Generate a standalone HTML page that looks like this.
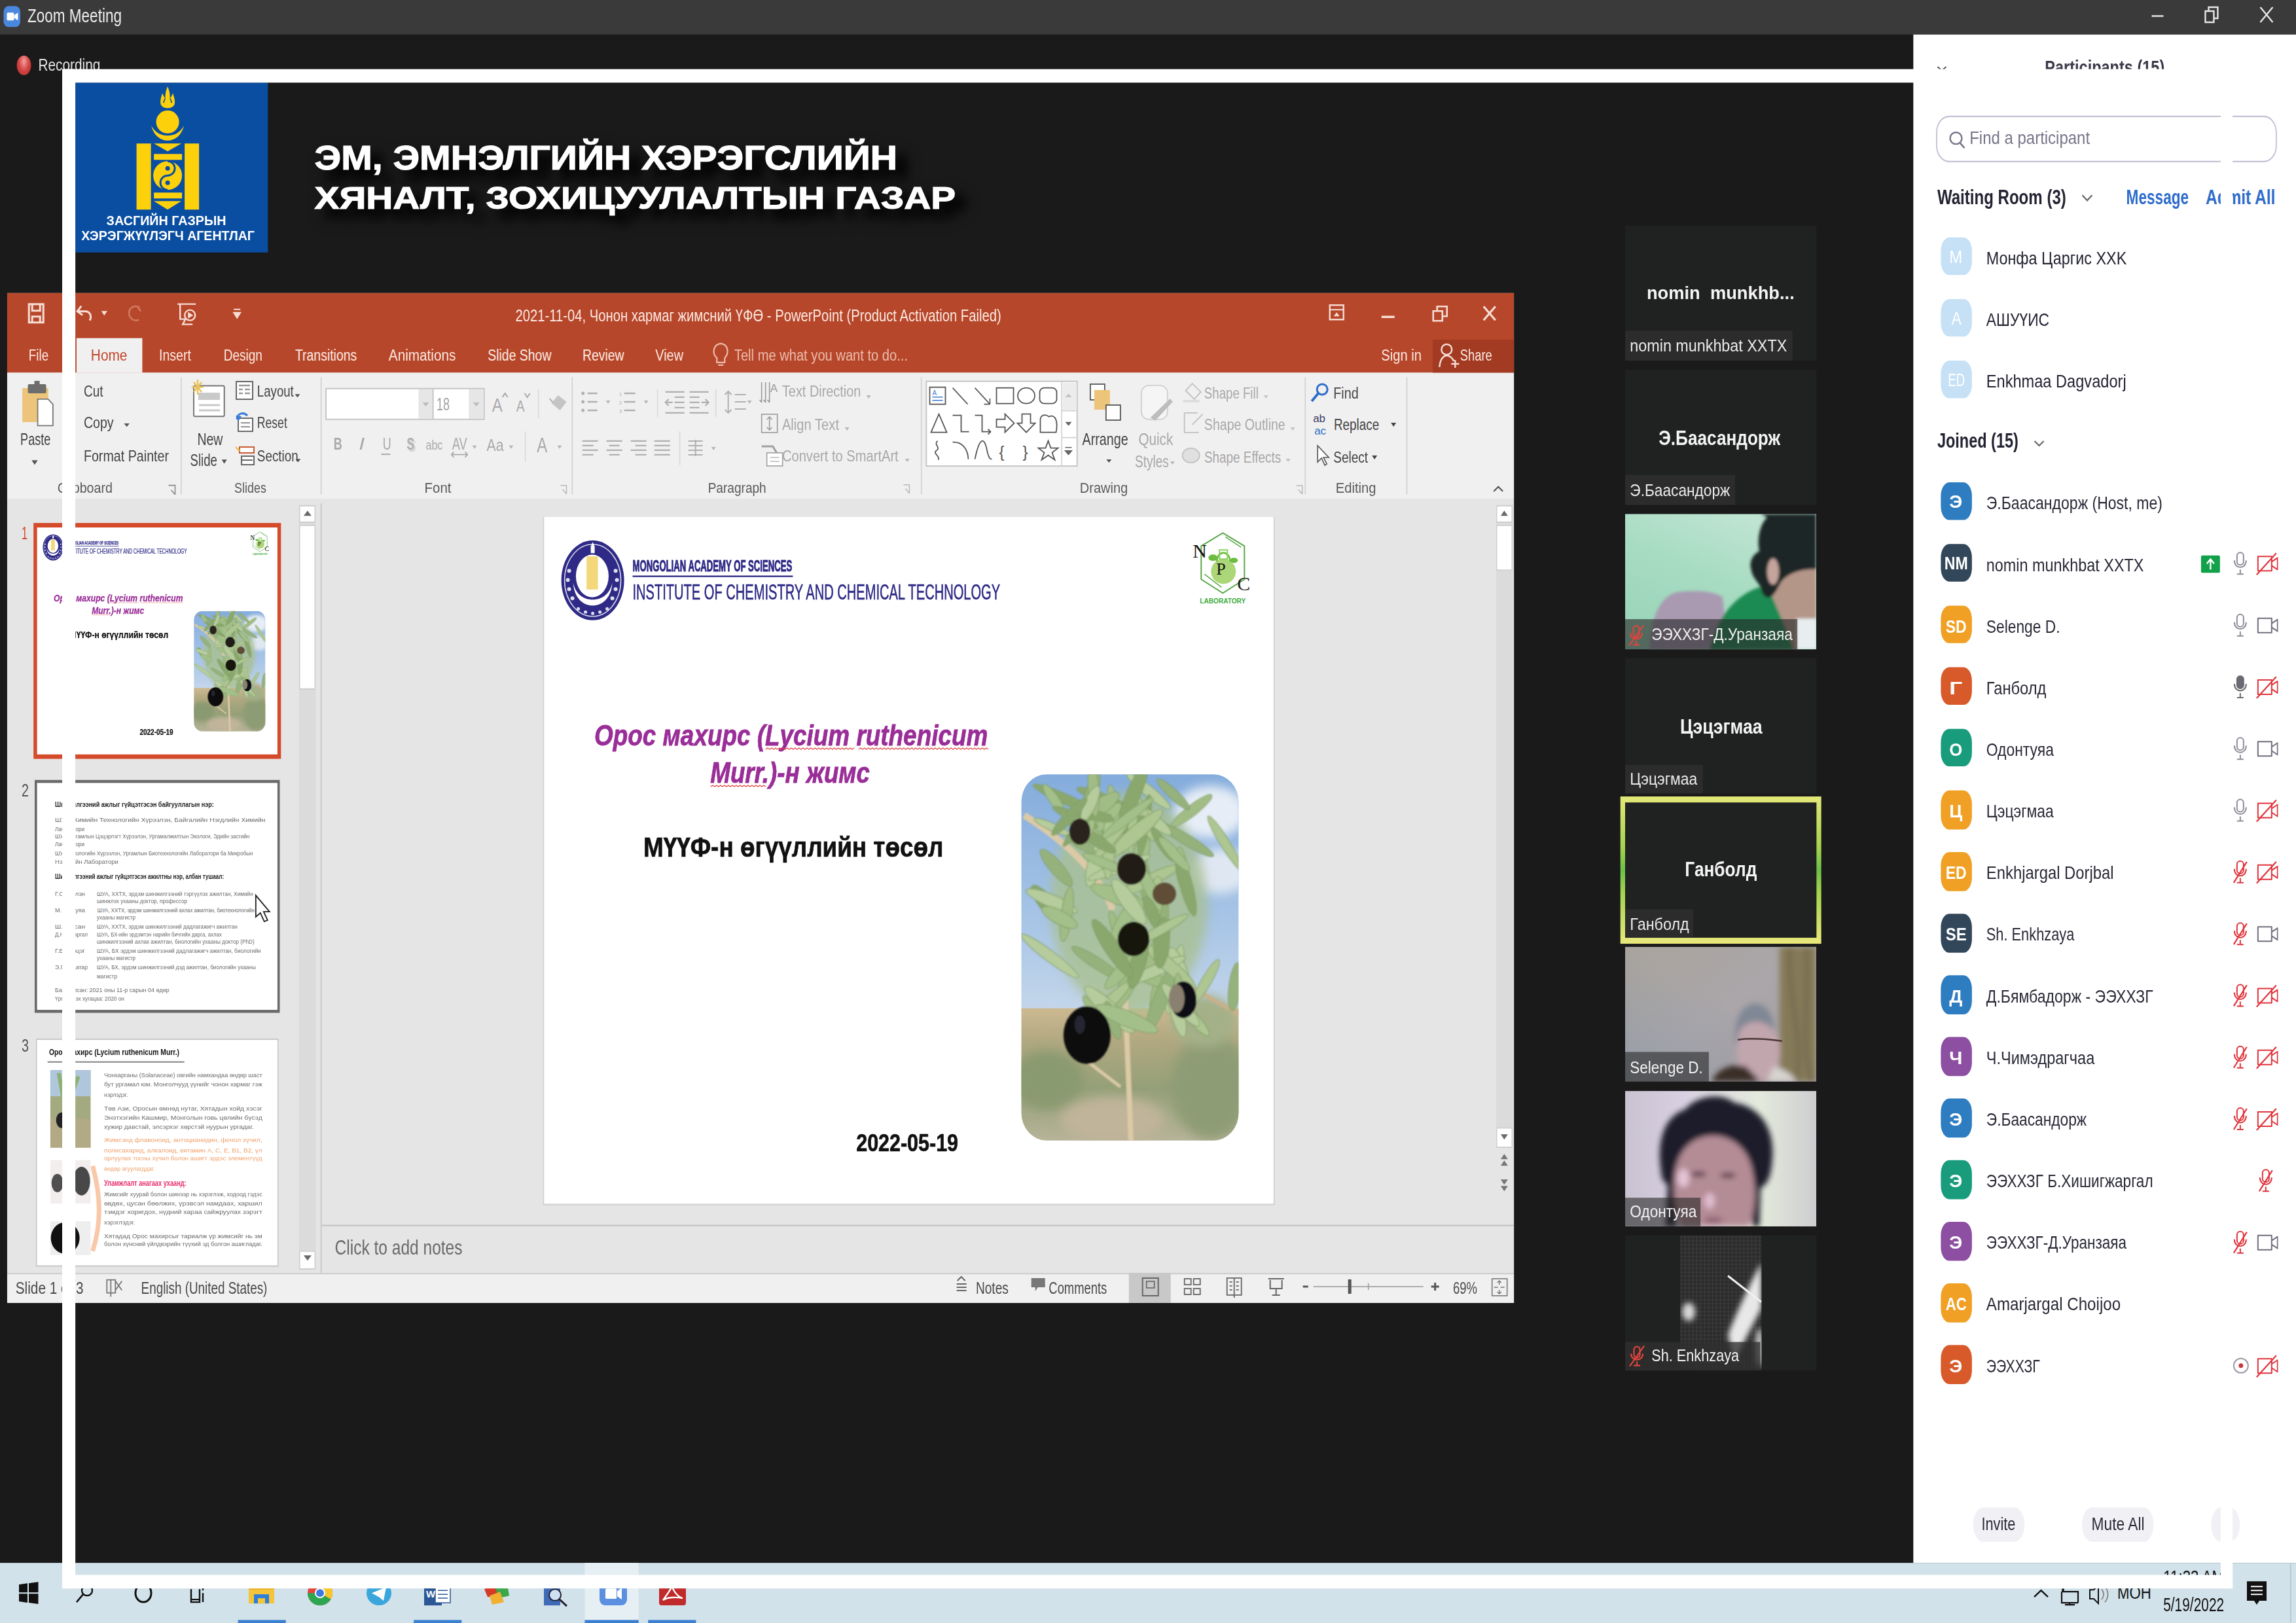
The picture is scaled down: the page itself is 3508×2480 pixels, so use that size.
<!DOCTYPE html>
<html><head><meta charset="utf-8">
<style>
html,body{margin:0;padding:0;width:3508px;height:2480px;overflow:hidden;background:#1a1a1a;}
#s{position:absolute;left:0;top:0;width:1920px;height:1080px;transform:scale(1.8270833,2.2962963);transform-origin:0 0;font-family:"Liberation Sans",sans-serif;overflow:hidden;background:#1a1a1a;}
#s div{position:absolute;}
.t{white-space:nowrap;line-height:1;}
</style></head>
<body><div id="s">
<div style="left:0px;top:0px;width:1920px;height:23.08px;background:#3a3a3a;"></div>
<div style="left:2.74px;top:3.92px;width:14.23px;height:13.94px;background:#4a87df;border-radius:4px"></div>
<svg style="position:absolute;left:2.74px;top:3.92px;width:14.23px;height:13.94px;overflow:visible;" viewBox="5 9 26 32" preserveAspectRatio="none"><rect x="10" y="19" width="11" height="12" rx="2" fill="#fff"/><path d="M21 23 L27 19 L27 31 L21 27 Z" fill="#fff"/></svg>
<div class="t" style="left:22.99px;top:5.3px;font-size:12.77px;color:#ececec;transform:scaleX(0.9654);transform-origin:0 0;">Zoom Meeting</div>
<svg style="position:absolute;left:1789.74px;top:0px;width:130.26px;height:23.08px;overflow:visible;" viewBox="3270 0 238 53" preserveAspectRatio="none"><path d="M3287 24.5 H3305" stroke="#e6e6e6" stroke-width="2.5"/><path d="M3369 17 H3382 V34 H3369 Z M3374 17 V11 H3388 V28 H3382" stroke="#e6e6e6" stroke-width="2.4" fill="none"/><path d="M3453 11 L3472 34 M3472 11 L3453 34" stroke="#e6e6e6" stroke-width="2.4"/></svg>
<div style="left:13.68px;top:37.45px;width:12.04px;height:13.06px;background:radial-gradient(ellipse at 50% 30%,#f4a0a0 0%,#d84a4a 45%,#b83030 80%);border-radius:50%"></div>
<div class="t" style="left:32.29px;top:37.76px;font-size:10.95px;color:#e2e2e2;transform:scaleX(1.0419);transform-origin:0 0;">Recording</div>
<div style="left:63.49px;top:54.87px;width:160.36px;height:112.79px;background:#0a4ea2;"></div>
<svg style="position:absolute;left:63.49px;top:54.87px;width:160.36px;height:112.79px;overflow:visible;" viewBox="116 126 293 259" preserveAspectRatio="none"><path d="M246 156 C246 150 248 146 249 142 C251 147 252 149 253.5 150 C253 142 255 137 257 131.7 C259 137 261 142 260.5 150 C262 149 263 147 265 142 C266 146 268 150 268 156 C268 162 263 165 257 165 C251 165 246 162 246 156 Z" fill="#fcd10c"/><path d="M251 157 C251 153 253 151 253.5 150 M263 157 C263 153 261 151 260.5 150" stroke="#0a4ea2" stroke-width="1.5" fill="none"/><circle cx="257" cy="186" r="17.5" fill="#fcd10c"/><path d="M232 192 C236 207 246 214.5 257 214.5 C268 214.5 278 207 282 192 C276 202 268 207 257 207 C246 207 238 202 232 192 Z" fill="#fcd10c"/><rect x="209.5" y="219" width="22" height="101" fill="#fcd10c"/><rect x="283" y="219" width="22" height="101" fill="#fcd10c"/><path d="M236 219 H278 L257 231 Z" fill="#fcd10c"/><rect x="236" y="235" width="43" height="9" fill="#fcd10c"/><circle cx="257" cy="268" r="22" fill="#fcd10c"/><path d="M257 246 A11 11 0 0 1 257 268 A11 11 0 0 0 257 290" stroke="#0a4ea2" stroke-width="3" fill="none"/><circle cx="257" cy="257" r="3.5" fill="#0a4ea2"/><circle cx="257" cy="279" r="3.5" fill="#0a4ea2"/><rect x="236" y="294" width="43" height="9" fill="#fcd10c"/><path d="M236 307 H278 L257 320 Z" fill="#fcd10c"/></svg>
<div class="t" style="left:89.21px;top:143.47px;font-size:8.52px;color:#fff;font-weight:bold;transform:scaleX(1.2687);transform-origin:0 0;">ЗАСГИЙН ГАЗРЫН</div>
<div class="t" style="left:68.42px;top:152.9px;font-size:8.7px;color:#fff;font-weight:bold;transform:scaleX(1.2325);transform-origin:0 0;">ХЭРЭГЖҮҮЛЭГЧ АГЕНТЛАГ</div>
<div class="t" style="left:263.26px;top:94.65px;font-size:22.2px;color:#fff;font-weight:bold;transform:scaleX(1.4090);transform-origin:0 0;-webkit-text-stroke:0.5px #fff;text-shadow:6px 6px 6px #000,5px 6px 10px #000;">ЭМ, ЭМНЭЛГИЙН ХЭРЭГСЛИЙН</div>
<div class="t" style="left:263.26px;top:122.21px;font-size:21.29px;color:#fff;font-weight:bold;transform:scaleX(1.4602);transform-origin:0 0;-webkit-text-stroke:0.5px #fff;text-shadow:6px 6px 6px #000,5px 6px 10px #000;">ХЯНАЛТ, ЗОХИЦУУЛАЛТЫН ГАЗАР</div>
<div style="left:6.02px;top:195.1px;width:1259.93px;height:671.52px;background:#e6e5e6;"></div>
<div style="left:6.02px;top:195.1px;width:1259.93px;height:52.69px;background:#b7472a;"></div>
<div style="left:6.02px;top:247.79px;width:1259.93px;height:84.48px;background:#f1f0f1;"></div>
<div style="left:63.87px;top:225.15px;width:55.33px;height:22.65px;background:#f1f0f1;"></div>
<div class="t" style="left:430.74px;top:204.99px;font-size:10.95px;color:#fbe8e2;transform:scaleX(1.0134);transform-origin:0 0;">2021-11-04, Чонон хармаг жимсний ҮФӨ - PowerPoint (Product Activation Failed)</div>
<div class="t" style="left:24.41px;top:230.94px;font-size:10.64px;color:#fbe9e3;transform:scaleX(0.9669);transform-origin:0 0;">File</div>
<div class="t" style="left:76.3px;top:230.94px;font-size:10.64px;color:#c0462a;transform:scaleX(1.0737);transform-origin:0 0;">Home</div>
<div class="t" style="left:133px;top:230.94px;font-size:10.64px;color:#fbe9e3;transform:scaleX(1.0075);transform-origin:0 0;">Insert</div>
<div class="t" style="left:187.18px;top:230.94px;font-size:10.64px;color:#fbe9e3;transform:scaleX(0.9812);transform-origin:0 0;">Design</div>
<div class="t" style="left:246.84px;top:230.94px;font-size:10.64px;color:#fbe9e3;">Transitions</div>
<div class="t" style="left:325.11px;top:230.94px;font-size:10.64px;color:#fbe9e3;transform:scaleX(1.0686);transform-origin:0 0;">Animations</div>
<div class="t" style="left:407.92px;top:230.94px;font-size:10.64px;color:#fbe9e3;">Slide Show</div>
<div class="t" style="left:487.06px;top:230.94px;font-size:10.64px;color:#fbe9e3;">Review</div>
<div class="t" style="left:548.09px;top:230.94px;font-size:10.64px;color:#fbe9e3;transform:scaleX(1.0263);transform-origin:0 0;">View</div>
<div class="t" style="left:614.26px;top:230.94px;font-size:10.64px;color:#ebbcad;transform:scaleX(1.0371);transform-origin:0 0;">Tell me what you want to do...</div>
<div class="t" style="left:1154.85px;top:230.94px;font-size:10.64px;color:#fbe9e3;transform:scaleX(1.0376);transform-origin:0 0;">Sign in</div>
<div style="left:1197.54px;top:225.58px;width:68.42px;height:22.21px;background:#a33b22;"></div>
<div class="t" style="left:1221.07px;top:230.94px;font-size:10.64px;color:#fbe9e3;transform:scaleX(0.9442);transform-origin:0 0;">Share</div>
<svg style="position:absolute;left:16.42px;top:198.15px;width:191.56px;height:19.6px;overflow:visible;" viewBox="30 455 350 45" preserveAspectRatio="none"><path d="M45 465 H67 V493 H45 Z M50 465 V475 H62 V465 M50 493 V484 H62 V493" stroke="#f6ddd5" stroke-width="3" fill="none"/><path d="M125 468 L119 476 L127 482 M120 476 H131 C139 476 141 484 138 490" stroke="#f6ddd5" stroke-width="3" fill="none"/><path d="M155.6 475.6 H164.7 L160 482.7 Z" fill="#f6ddd5"/><path d="M210 468 L216 476 M214 470 C205 465 197 472 198 480 C199 488 207 492 213 489" stroke="#cf7a62" stroke-width="2.5" fill="none"/><path d="M272 465 H300 M276 466 V488 H284 M284 488 L280 496 H295" stroke="#f6ddd5" stroke-width="2.4" fill="none"/><circle cx="291" cy="482" r="8" stroke="#f6ddd5" stroke-width="2.4" fill="none"/><path d="M288 477 L296 482 L288 487 Z" fill="#f6ddd5"/><path d="M358 473 H368 M358 478 H368 L363 486 Z" stroke="#f6ddd5" stroke-width="2" fill="#f6ddd5"/></svg>
<svg style="position:absolute;left:1105.59px;top:200.32px;width:153.25px;height:17.42px;overflow:visible;" viewBox="2020 460 280 40" preserveAspectRatio="none"><rect x="2031" y="467" width="21" height="22" stroke="#f6ddd5" stroke-width="2.4" fill="none"/><path d="M2031 474 H2052" stroke="#f6ddd5" stroke-width="2"/><path d="M2037 484 L2041.5 478 L2046 484 Z" fill="#f6ddd5"/><path d="M2110 485 H2130" stroke="#f6ddd5" stroke-width="3.5"/><path d="M2189 476 H2203 V491 H2189 Z M2195 476 V469 H2210 V484 H2203" stroke="#f6ddd5" stroke-width="2.6" fill="none"/><path d="M2266 469 L2284 490 M2284 469 L2266 490" stroke="#f6ddd5" stroke-width="3.2"/></svg>
<svg style="position:absolute;left:1201.37px;top:226.45px;width:21.89px;height:21.77px;overflow:visible;" viewBox="2195 520 40 50" preserveAspectRatio="none"><circle cx="2211" cy="535" r="8" stroke="#f6ddd5" stroke-width="2.4" fill="none"/><path d="M2200 562 C2201 550 2206 545 2211 544 C2216 545 2220 548 2222 553 M2218 557 H2230 M2224 551 V563" stroke="#f6ddd5" stroke-width="2.4" fill="none"/></svg>
<svg style="position:absolute;left:593.84px;top:226.45px;width:19.16px;height:21.77px;overflow:visible;" viewBox="1085 520 35 50" preserveAspectRatio="none"><path d="M1095 548 C1088 542 1088 528 1101 526 C1114 528 1113 542 1107 548 V555 H1095 Z M1097 559 H1105" stroke="#ebbcad" stroke-width="2.2" fill="none"/></svg>
<svg style="position:absolute;left:13.68px;top:252.58px;width:35.58px;height:60.97px;overflow:visible;" viewBox="25 580 65 140" preserveAspectRatio="none"><rect x="33.5" y="592" width="39.7" height="52" fill="#edc57a"/><rect x="42" y="586" width="28" height="14" rx="2" fill="#6d6d6d"/><rect x="52" y="581" width="8" height="8" fill="#6d6d6d"/><path d="M57 609 H73 L80.3 617 V649.5 H57 Z" fill="#fff" stroke="#777" stroke-width="1.8"/><path d="M47.8 702.3 H57 L52.4 709.4 Z" fill="#555"/></svg>
<div class="t" style="left:16.69px;top:287.14px;font-size:11.13px;color:#444444;transform:scaleX(0.8923);transform-origin:0 0;">Paste</div>
<div class="t" style="left:69.51px;top:256.15px;font-size:10.04px;color:#444444;transform:scaleX(1.0374);transform-origin:0 0;">Cut</div>
<div class="t" style="left:69.51px;top:277.4px;font-size:10.04px;color:#444444;transform:scaleX(1.0700);transform-origin:0 0;">Copy</div>
<div class="t" style="left:69.51px;top:299.13px;font-size:10.04px;color:#444444;transform:scaleX(1.0737);transform-origin:0 0;">Format Painter</div>
<svg style="position:absolute;left:101.25px;top:278.71px;width:41.05px;height:52.26px;overflow:visible;" viewBox="185 640 75 120" preserveAspectRatio="none"><path d="M190 646.4 H198.3 L194.2 651.5 Z" fill="#555"/><path d="M258 741 H268 V755 M262 748 L268 755" stroke="#888" stroke-width="1.6" fill="none"/></svg>
<div class="t" style="left:47.84px;top:320.62px;font-size:9.24px;color:#5a5a5a;transform:scaleX(1.1673);transform-origin:0 0;">Clipboard</div>
<div style="left:151.06px;top:251.27px;width:0.82px;height:77.52px;background:#d4d4d4;"></div>
<svg style="position:absolute;left:155.99px;top:250.4px;width:62.94px;height:63.15px;overflow:visible;" viewBox="285 575 115 145" preserveAspectRatio="none"><rect x="296" y="590.5" width="46.7" height="46.8" rx="2" fill="#fff" stroke="#777" stroke-width="2"/><rect x="303" y="601" width="33" height="11" fill="#c9c9c9"/><path d="M304 620 H336 M304 628 H336" stroke="#c9c9c9" stroke-width="3"/><g stroke="#e8c25a" stroke-width="2.5"><path d="M302 581 V604 M292.8 592.5 H311 M296 585 L308 600 M308 585 L296 600"/></g><path d="M338.6 703.3 H346.7 L342.6 709.4 Z" fill="#555"/><rect x="361" y="584" width="25" height="27" fill="#fff" stroke="#666" stroke-width="2"/><path d="M365 590 H382 M365 596 H371 M365 602 H371 M374 596 H382 M374 602 H382" stroke="#999" stroke-width="2.4"/><rect x="364" y="640" width="22" height="20" fill="#fff" stroke="#666" stroke-width="2"/><path d="M368 647 H382 M368 653 H382" stroke="#999" stroke-width="2.2"/><path d="M362 642 C362 632 372 630 378 636" stroke="#3a7bd5" stroke-width="3" fill="none"/><path d="M360 636 L364 645 L369 637 Z" fill="#3a7bd5"/><rect x="366" y="684" width="22" height="9" fill="#fff" stroke="#c85a30" stroke-width="2"/><rect x="369" y="698" width="19" height="13" fill="#fff" stroke="#666" stroke-width="2"/><path d="M370 704 H386" stroke="#666" stroke-width="2"/><path d="M360 684 L366 690" stroke="#e8c25a" stroke-width="2.5"/></svg>
<div class="t" style="left:164.52px;top:287.3px;font-size:10.95px;color:#444444;transform:scaleX(0.9746);transform-origin:0 0;">New</div>
<div class="t" style="left:159.38px;top:301.45px;font-size:10.95px;color:#444444;transform:scaleX(0.9285);transform-origin:0 0;">Slide</div>
<div class="t" style="left:214.55px;top:256.15px;font-size:10.04px;color:#444444;transform:scaleX(1.0172);transform-origin:0 0;">Layout</div>
<div class="t" style="left:214.55px;top:277.4px;font-size:10.04px;color:#444444;transform:scaleX(0.9603);transform-origin:0 0;">Reset</div>
<div class="t" style="left:214.55px;top:299.13px;font-size:10.04px;color:#444444;transform:scaleX(1.0301);transform-origin:0 0;">Section</div>
<svg style="position:absolute;left:246.29px;top:261.29px;width:10.95px;height:52.26px;overflow:visible;" viewBox="450 600 20 120" preserveAspectRatio="none"><path d="M451 603 H459 L455 608 Z M452 702 H460 L456 707 Z" fill="#555"/></svg>
<div class="t" style="left:196.43px;top:320.62px;font-size:9.24px;color:#5a5a5a;transform:scaleX(1.0607);transform-origin:0 0;">Slides</div>
<div style="left:268.19px;top:251.27px;width:0.82px;height:77.52px;background:#d4d4d4;"></div>
<svg style="position:absolute;left:268.19px;top:252.58px;width:213.45px;height:78.39px;overflow:visible;" viewBox="490 580 390 180" preserveAspectRatio="none"><rect x="498.4" y="592.8" width="241.6" height="47" fill="#fff" stroke="#c6c6c6" stroke-width="2"/><rect x="639.7" y="594" width="22.3" height="45" fill="#e6e6e6"/><rect x="716.6" y="594" width="22.4" height="45" fill="#e6e6e6"/><path d="M662 593 V640" stroke="#c6c6c6" stroke-width="2"/><path d="M646 614 H656 L651 620 Z M723 614 H733 L728 620 Z" fill="#bcbcbc"/><text x="752" y="628" font-family="Liberation Sans" font-size="30" fill="#a9a9a9" transform="translate(752 628) scale(0.8 1) translate(-752 -628)">A</text><path d="M768 606 L772 600 L776 606" stroke="#a9a9a9" stroke-width="2" fill="none"/><text x="789" y="628" font-family="Liberation Sans" font-size="24" fill="#a9a9a9" transform="translate(789 628) scale(0.8 1) translate(-789 -628)">A</text><path d="M802 600 L806 606 L810 600" stroke="#a9a9a9" stroke-width="2" fill="none"/><path d="M823 594 V638" stroke="#d8d8d8" stroke-width="1.5"/><path d="M843 615 L853 603 L866 613 L856 626 Z" fill="#c4c4c4"/><path d="M845 614 L840 608" stroke="#b0b0b0" stroke-width="2"/><path d="M803 658 V704" stroke="#d8d8d8" stroke-width="1.5"/></svg>
<div class="t" style="left:365.06px;top:262.75px;font-size:12.16px;color:#a0a0a0;transform:scaleX(0.8090);transform-origin:0 0;">18</div>
<div class="t" style="left:278.59px;top:290.27px;font-size:11.56px;color:#a9a9a9;font-weight:bold;transform:scaleX(0.8526);transform-origin:0 0;">B</div>
<div class="t" style="left:299.66px;top:290.27px;font-size:11.56px;color:#a9a9a9;font-style:italic;transform:scaleX(1.5343);transform-origin:0 0;">I</div>
<div class="t" style="left:319.64px;top:290.27px;font-size:11.56px;color:#a9a9a9;transform:scaleX(0.8526);transform-origin:0 0;">U</div>
<div class="t" style="left:340.43px;top:290.27px;font-size:11.56px;color:#b0b0b0;font-weight:bold;transform:scaleX(0.8520);transform-origin:0 0;text-shadow:1.5px 1.5px 1px #d0d0d0;">S</div>
<div class="t" style="left:356.31px;top:292.33px;font-size:9.12px;color:#a9a9a9;transform:scaleX(0.9674);transform-origin:0 0;">abc</div>
<div class="t" style="left:377.65px;top:290.27px;font-size:11.56px;color:#a9a9a9;transform:scaleX(0.8646);transform-origin:0 0;">AV</div>
<div class="t" style="left:407.21px;top:290.78px;font-size:10.95px;color:#a9a9a9;transform:scaleX(1.0626);transform-origin:0 0;">Aa</div>
<div class="t" style="left:449.35px;top:289.59px;font-size:13.38px;color:#a9a9a9;transform:scaleX(0.9811);transform-origin:0 0;">A</div>
<svg style="position:absolute;left:350.29px;top:278.71px;width:131.36px;height:52.26px;overflow:visible;" viewBox="640 640 240 120" preserveAspectRatio="none"><path d="M583 693.5 H597" stroke="#a9a9a9" stroke-width="2"/><path d="M690 694 H715 M690 694 L694 690 M690 694 L694 698 M715 694 L711 690 M715 694 L711 698" stroke="#a9a9a9" stroke-width="1.8" fill="none"/><path d="M722 680 H729 L725.5 685 Z M778 680 H785 L781.5 685 Z M852 680 H859 L855.5 685 Z" fill="#b5b5b5"/><path d="M857 741 H866 V754 M860 747 L866 754" stroke="#b8b8b8" stroke-width="1.5" fill="none"/></svg>
<div class="t" style="left:354.61px;top:321.27px;font-size:9.24px;color:#5a5a5a;transform:scaleX(1.2101);transform-origin:0 0;">Font</div>
<div style="left:477.81px;top:251.27px;width:0.82px;height:77.52px;background:#d4d4d4;"></div>
<svg style="position:absolute;left:481.64px;top:252.58px;width:284.61px;height:78.39px;overflow:visible;" viewBox="880 580 520 180" preserveAspectRatio="none"><g fill="#b0b0b0"><circle cx="890" cy="600" r="2.5"/><circle cx="890" cy="613" r="2.5"/><circle cx="890" cy="626" r="2.5"/></g><path d="M897 600 H912 M897 613 H912 M897 626 H912" stroke="#b0b0b0" stroke-width="2.5"/><path d="M925 611 H932 L928.5 616 Z M983 611 H990 L986.5 616 Z M1141 611 H1148 L1144.5 616 Z" fill="#b8b8b8"/><g fill="#b0b0b0" font-family="Liberation Sans" font-size="8"><text x="945" y="604">1</text><text x="945" y="617">2</text><text x="945" y="630">3</text></g><path d="M953 600 H970 M953 613 H970 M953 626 H970" stroke="#b0b0b0" stroke-width="2.5"/><path d="M1004 594 V636 M1093 594 V636 M1038 658 V710" stroke="#d8d8d8" stroke-width="1.5"/><path d="M1016 598 H1045 M1030 606 H1045 M1030 614 H1045 M1030 622 H1045 M1016 630 H1045 M1027 614 H1016 M1021 609 L1016 614 L1021 619" stroke="#b0b0b0" stroke-width="2.2" fill="none"/><path d="M1053 598 H1082 M1053 606 H1068 M1053 614 H1068 M1053 622 H1068 M1053 630 H1082 M1071 614 H1082 M1077 609 L1082 614 L1077 619" stroke="#b0b0b0" stroke-width="2.2" fill="none"/><path d="M1112 597 V630 M1107 602 L1112 597 L1117 602 M1107 625 L1112 630 L1117 625 M1122 602 H1139 M1122 613 H1139 M1122 624 H1139" stroke="#b0b0b0" stroke-width="2" fill="none"/><path d="M1163 583 V614 M1169 583 V614 M1175 583 V614 M1163 614 L1160 610 M1169 614 L1166 610 M1175 614 L1172 610" stroke="#9a9a9a" stroke-width="1.6" fill="none"/><text x="1176" y="598" font-family="Liberation Sans" font-size="17" fill="#9a9a9a">A</text><rect x="1163" y="632" width="24" height="28" fill="none" stroke="#9a9a9a" stroke-width="1.6"/><path d="M1175 636 V656 M1171 640 L1175 636 L1179 640 M1171 652 L1175 656 L1179 652" stroke="#9a9a9a" stroke-width="1.6" fill="none"/><path d="M1163 681 H1180 L1188 694" stroke="#a0a0a0" stroke-width="3" fill="none"/><rect x="1171" y="691" width="24" height="20" fill="#fff" stroke="#a0a0a0" stroke-width="1.6"/><path d="M1176 698 H1190 M1176 704 H1190" stroke="#b8b8b8" stroke-width="1.5"/><path d="M1323 603 H1330 L1326.5 608 Z M1290 652 H1297 L1293.5 657 Z M1382 700 H1389 L1385.5 705 Z" fill="#b8b8b8"/><path d="M889 673 H913 M889 680 H906 M889 687 H913 M889 694 H906" stroke="#b0b0b0" stroke-width="2.2"/><path d="M926 673 H950 M930 680 H946 M926 687 H950 M930 694 H946" stroke="#b0b0b0" stroke-width="2.2"/><path d="M963 673 H987 M970 680 H987 M963 687 H987 M970 694 H987" stroke="#b0b0b0" stroke-width="2.2"/><path d="M999 673 H1023 M999 680 H1023 M999 687 H1023 M999 694 H1023" stroke="#b0b0b0" stroke-width="2.2"/><path d="M1051 673 H1073 M1051 680 H1073 M1051 687 H1073 M1051 694 H1073 M1062 671 V696" stroke="#b0b0b0" stroke-width="2"/><path d="M1086 682 H1093 L1089.5 687 Z" fill="#b8b8b8"/></svg>
<svg style="position:absolute;left:755.3px;top:320.08px;width:10.95px;height:10.89px;overflow:visible;" viewBox="1380 735 20 25" preserveAspectRatio="none"><path d="M1381 741 H1390 V754 M1384 747 L1390 754" stroke="#b8b8b8" stroke-width="1.5" fill="none"/></svg>
<div class="t" style="left:653.72px;top:256.15px;font-size:10.34px;color:#a8a8a8;transform:scaleX(1.0538);transform-origin:0 0;">Text Direction</div>
<div class="t" style="left:653.72px;top:277.93px;font-size:10.34px;color:#a8a8a8;transform:scaleX(1.0691);transform-origin:0 0;">Align Text</div>
<div class="t" style="left:653.72px;top:298.96px;font-size:10.34px;color:#a8a8a8;transform:scaleX(1.0663);transform-origin:0 0;">Convert to SmartArt</div>
<div class="t" style="left:592.09px;top:321.27px;font-size:9.24px;color:#5a5a5a;transform:scaleX(1.1308);transform-origin:0 0;">Paragraph</div>
<div style="left:769.53px;top:251.27px;width:0.82px;height:77.52px;background:#d4d4d4;"></div>
<svg style="position:absolute;left:771.72px;top:251.71px;width:131.36px;height:59.66px;overflow:visible;" viewBox="1410 578 240 137" preserveAspectRatio="none"><rect x="1414.8" y="582" width="230.4" height="129.5" fill="#fff" stroke="#c6c6c6" stroke-width="2"/><path d="M1621.6 583 V711 M1622 627 H1645 M1622 668 H1645" stroke="#d0d0d0" stroke-width="1.6"/><rect x="1623" y="584" width="21" height="42" fill="#ececec"/><path d="M1627 606 L1632 601 L1637 606 Z" fill="#c0c0c0"/><path d="M1627 644 H1637 L1632 650 Z" fill="#666"/><path d="M1627 683 H1637 M1627 688 H1637 L1632 694 Z" stroke="#666" stroke-width="1.5" fill="#666"/><rect x="1420" y="591" width="24" height="26" fill="none" stroke="#555" stroke-width="1.8"/><path d="M1424 606 H1440 M1424 611 H1440" stroke="#3a7bd5" stroke-width="1.5"/><text x="1424" y="603" font-size="10" font-family="Liberation Sans" fill="#3a7bd5">A</text><path d="M1455 592 L1478 617" stroke="#555" stroke-width="1.6"/><path d="M1489 592 L1512 617 M1512 617 V608 M1512 617 H1503" stroke="#555" stroke-width="1.6" fill="none"/><rect x="1522" y="592" width="26" height="24" fill="none" stroke="#555" stroke-width="1.8"/><ellipse cx="1567.5" cy="604" rx="13" ry="12" fill="none" stroke="#555" stroke-width="1.8"/><rect x="1588" y="592" width="26" height="24" rx="7" fill="none" stroke="#555" stroke-width="1.8"/><path d="M1422 660 L1434 632 L1446 660 Z" fill="none" stroke="#555" stroke-width="1.8"/><path d="M1455 634 H1468 V659 H1480" stroke="#555" stroke-width="1.8" fill="none"/><path d="M1489 634 H1500 V659 H1513 M1509 655 L1513 659 L1509 663" stroke="#555" stroke-width="1.8" fill="none"/><path d="M1522 640 H1535 V632 L1549 646 L1535 660 V652 H1522 Z" fill="none" stroke="#555" stroke-width="1.8"/><path d="M1561 632 H1574 V646 H1581 L1567.5 660 L1554 646 H1561 Z" fill="none" stroke="#555" stroke-width="1.8"/><path d="M1589 660 V641 C1589 634 1596 631 1602 636 C1613 631 1616 645 1613 660 Z" fill="none" stroke="#555" stroke-width="1.8"/><path d="M1432 673 C1425 679 1438 683 1430 688 C1424 692 1437 697 1433 702" stroke="#555" stroke-width="1.8" fill="none"/><path d="M1455 675 C1468 674 1478 683 1479 701" stroke="#555" stroke-width="1.8" fill="none"/><path d="M1489 701 C1496 667 1503 667 1507 685 C1510 701 1513 701 1515 701" stroke="#555" stroke-width="1.8" fill="none"/><text x="1526" y="698" font-size="24" font-family="Liberation Sans" fill="#555">{</text><text x="1562" y="698" font-size="24" font-family="Liberation Sans" fill="#555">}</text><path d="M1601 673 L1605 684 L1616 684 L1607 691 L1611 702 L1601 695 L1591 702 L1595 691 L1586 684 L1597 684 Z" fill="none" stroke="#555" stroke-width="1.8"/></svg>
<svg style="position:absolute;left:903.08px;top:252.58px;width:82.1px;height:60.97px;overflow:visible;" viewBox="1650 580 150 140" preserveAspectRatio="none"><rect x="1666" y="586" width="22" height="24" fill="#fff" stroke="#555" stroke-width="1.8"/><rect x="1672" y="595" width="24" height="30" fill="#edc57a"/><rect x="1690" y="618" width="22" height="23" fill="#fff" stroke="#555" stroke-width="1.8"/><path d="M1690.5 701 H1698.5 L1694.5 706 Z" fill="#555"/><rect x="1744" y="588" width="40" height="52" rx="12" fill="#f5f5f5" stroke="#cfcfcf" stroke-width="1.8"/><path d="M1758 637 L1788 608 L1792 613 L1765 642 Z" fill="#bdbdbd"/><path d="M1788 704 H1795 L1791.5 709 Z" fill="#b8b8b8"/></svg>
<div class="t" style="left:905.49px;top:286.86px;font-size:10.95px;color:#444444;transform:scaleX(0.9864);transform-origin:0 0;">Arrange</div>
<div class="t" style="left:952.23px;top:286.86px;font-size:10.95px;color:#a8a8a8;transform:scaleX(1.0366);transform-origin:0 0;">Quick</div>
<div class="t" style="left:948.73px;top:301.8px;font-size:10.95px;color:#a8a8a8;transform:scaleX(0.9546);transform-origin:0 0;">Styles</div>
<svg style="position:absolute;left:985.18px;top:252.58px;width:103.99px;height:60.97px;overflow:visible;" viewBox="1800 580 190 140" preserveAspectRatio="none"><path d="M1812 596 L1822 585 L1835 598 L1825 609 Z" fill="none" stroke="#c0c0c0" stroke-width="1.8"/><rect x="1808" y="610" width="25" height="4" fill="#ddd"/><path d="M1810 630 H1830 M1810 630 V660 H1832 M1822 648 L1838 632" stroke="#c0c0c0" stroke-width="1.8" fill="none"/><ellipse cx="1820" cy="695" rx="13" ry="11" fill="#e0e0e0" stroke="#c0c0c0" stroke-width="1.8"/><path d="M1931 603 H1938 L1934.5 608 Z M1972 652 H1979 L1975.5 657 Z M1965 700 H1972 L1968.5 705 Z" fill="#c4c4c4"/><path d="M1981 741 H1990 V754 M1984 747 L1990 754" stroke="#b8b8b8" stroke-width="1.5" fill="none"/></svg>
<div class="t" style="left:1007.07px;top:256.89px;font-size:10.34px;color:#a8a8a8;transform:scaleX(0.9880);transform-origin:0 0;">Shape Fill</div>
<div class="t" style="left:1007.07px;top:277.8px;font-size:10.34px;color:#a8a8a8;transform:scaleX(1.0356);transform-origin:0 0;">Shape Outline</div>
<div class="t" style="left:1007.07px;top:299.57px;font-size:10.34px;color:#a8a8a8;">Shape Effects</div>
<div class="t" style="left:902.64px;top:320.66px;font-size:9.24px;color:#5a5a5a;transform:scaleX(1.1847);transform-origin:0 0;">Drawing</div>
<div style="left:1090.81px;top:251.27px;width:0.82px;height:77.52px;background:#d4d4d4;"></div>
<svg style="position:absolute;left:1091.9px;top:252.58px;width:84.83px;height:60.97px;overflow:visible;" viewBox="1995 580 155 140" preserveAspectRatio="none"><circle cx="2020" cy="594" r="8" fill="none" stroke="#2f6fc8" stroke-width="3"/><path d="M2014 600 L2004 612" stroke="#2f6fc8" stroke-width="4"/><text x="2006" y="644" font-family="Liberation Sans" font-size="17" fill="#3d3d6b">ab</text><text x="2008" y="663" font-family="Liberation Sans" font-size="17" fill="#2f6fc8">ac</text><path d="M2013 680 V705 L2019 699 L2024 710 L2027 708 L2022 698 L2030 698 Z" fill="#fff" stroke="#555" stroke-width="1.6"/><path d="M2125 645 H2133 L2129 651 Z M2096 695 H2104 L2100 701 Z" fill="#444"/></svg>
<div class="t" style="left:1115.44px;top:256.89px;font-size:10.34px;color:#444444;transform:scaleX(1.0476);transform-origin:0 0;">Find</div>
<div class="t" style="left:1115.44px;top:277.8px;font-size:10.34px;color:#444444;">Replace</div>
<div class="t" style="left:1115.44px;top:299.57px;font-size:10.34px;color:#444444;transform:scaleX(1.0094);transform-origin:0 0;">Select</div>
<div class="t" style="left:1116.7px;top:320.66px;font-size:9.24px;color:#5a5a5a;transform:scaleX(1.1946);transform-origin:0 0;">Editing</div>
<div style="left:1175.64px;top:251.27px;width:0.82px;height:77.52px;background:#d4d4d4;"></div>
<svg style="position:absolute;left:1247.89px;top:320.08px;width:10.95px;height:8.71px;overflow:visible;" viewBox="2280 735 20 20" preserveAspectRatio="none"><path d="M2282 751 L2289 744 L2296 751" stroke="#555" stroke-width="2.2" fill="none"/></svg>
<div style="left:6.02px;top:332.27px;width:1259.93px;height:515.18px;background:#e6e5e6;"></div>
<div style="left:267.91px;top:335.32px;width:0.82px;height:512.13px;background:#c9c8c9;"></div>
<div style="left:250.4px;top:335.76px;width:13.41px;height:509.08px;background:#dcdbdc;"></div>
<div style="left:250.4px;top:335.76px;width:13.41px;height:12.19px;background:#fff;box-sizing:border-box;border:1px solid #cfcfcf;"></div>
<div style="left:250.4px;top:349.26px;width:13.41px;height:110.18px;background:#fff;box-sizing:border-box;border:1px solid #cfcfcf;"></div>
<div style="left:250.4px;top:831.77px;width:13.41px;height:13.06px;background:#fff;box-sizing:border-box;border:1px solid #cfcfcf;"></div>
<svg style="position:absolute;left:249.03px;top:335.32px;width:16.42px;height:511.69px;overflow:visible;" viewBox="455 770 30 1175" preserveAspectRatio="none"><path d="M464 789 L470 781 L476 789 Z M464 1919 H476 L470 1927 Z" fill="#6a6a6a"/></svg>
<div class="t" style="left:17.51px;top:348.98px;font-size:12.16px;color:#d24726;transform:scaleX(0.7281);transform-origin:0 0;">1</div>
<div class="t" style="left:18.06px;top:520.12px;font-size:12.16px;color:#555;transform:scaleX(0.8899);transform-origin:0 0;">2</div>
<div class="t" style="left:18.06px;top:689.96px;font-size:12.16px;color:#555;transform:scaleX(0.8899);transform-origin:0 0;">3</div>
<div style="left:27.8px;top:347.95px;width:207px;height:157.04px;background:#fff;box-sizing:border-box;border:3.3px solid #d34b2a;"></div>
<div style="left:0;top:0;width:1920px;height:1080px;transform:translate(-118.41px,237.39px) scale(0.3285);transform-origin:0 0;"><svg style="position:absolute;left:465.22px;top:354.92px;width:82.1px;height:60.97px;overflow:visible;" viewBox="850 815 150 140" preserveAspectRatio="none"><ellipse cx="906" cy="886.6" rx="48" ry="61" fill="#2e2a86"/><ellipse cx="906" cy="886.6" rx="43" ry="55" fill="none" stroke="#fff" stroke-width="1.6" opacity="0.8"/><path d="M876 890 C878 915 892 925 906 925 C920 925 934 915 936 890 C932 908 920 916 906 916 C892 916 880 908 876 890 Z" fill="#fff"/><ellipse cx="905.3" cy="880" rx="25" ry="32.6" fill="#fff"/><rect x="896.6" y="850" width="17.4" height="50.6" fill="#f3d77a"/><path d="M903 835 L906 828 L909 835 V845 H903 Z" fill="#fff"/><g fill="#fff" opacity="0.85"><circle cx="870" cy="872" r="3"/><circle cx="868" cy="886" r="3"/><circle cx="870" cy="900" r="3"/><circle cx="875" cy="914" r="3"/><circle cx="941" cy="872" r="3"/><circle cx="943" cy="886" r="3"/><circle cx="941" cy="900" r="3"/><circle cx="936" cy="914" r="3"/><circle cx="884" cy="930" r="2.5"/><circle cx="895" cy="935" r="2.5"/><circle cx="906" cy="937" r="2.5"/><circle cx="917" cy="935" r="2.5"/><circle cx="928" cy="930" r="2.5"/></g></svg>
<div class="t" style="left:529.37px;top:371.69px;font-size:10.34px;color:#2e2a86;font-weight:bold;transform:scaleX(0.6960);transform-origin:0 0;-webkit-text-stroke:0.4px #2e2a86;">MONGOLIAN ACADEMY OF SCIENCES</div>
<div style="left:529.26px;top:382.7px;width:133.55px;height:1.13px;background:#2e2a86;"></div>
<div class="t" style="left:529.37px;top:386.54px;font-size:14.29px;color:#2e2a86;transform:scaleX(0.7695);transform-origin:0 0;-webkit-text-stroke:0.25px #2e2a86;">INSTITUTE OF CHEMISTRY AND CHEMICAL TECHNOLOGY</div>
<svg style="position:absolute;left:993.39px;top:351.87px;width:57.47px;height:53.13px;overflow:visible;" viewBox="1815 808 105 122" preserveAspectRatio="none"><path d="M1869 814 L1902 834 V885 L1869 906 L1836 885 V834 Z" fill="none" stroke="#5aa84a" stroke-width="2"/><path d="M1873 820 L1897 836" stroke="#5aa84a" stroke-width="1.5"/><path d="M1841 877 L1867 897" stroke="#5aa84a" stroke-width="1.5"/><circle cx="1870" cy="873" r="19" fill="#9ed060" opacity="0.85"/><path d="M1860 858 C1860 840 1880 840 1880 858" fill="none" stroke="#7cc050" stroke-width="3"/><rect x="1864" y="840" width="12" height="14" fill="none" stroke="#8bd060" stroke-width="2"/><ellipse cx="1854" cy="852" rx="7" ry="5" fill="#6cbc40"/><ellipse cx="1886" cy="856" rx="6" ry="4" fill="#6cbc40"/><text x="1823" y="852" font-family="Liberation Serif" font-size="30" fill="#111">N</text><text x="1859" y="878" font-family="Liberation Serif" font-size="26" fill="#111">P</text><text x="1891" y="902" font-family="Liberation Serif" font-size="30" fill="#222">C</text><text x="1834" y="922" font-family="Liberation Sans" font-weight="bold" font-size="10.5" fill="#3cab3c" textLength="70" lengthAdjust="spacingAndGlyphs">LABORATORY</text></svg>
<div class="t" style="left:496.97px;top:480.19px;font-size:19.46px;color:#9a2e98;font-weight:bold;font-style:italic;transform:scaleX(1.0387);transform-origin:0 0;-webkit-text-stroke:0.35px #9a2e98;">Орос махирс (Lycium ruthenicum</div>
<div class="t" style="left:594.39px;top:504.62px;font-size:19.46px;color:#9a2e98;font-weight:bold;font-style:italic;transform:scaleX(1.0340);transform-origin:0 0;-webkit-text-stroke:0.35px #9a2e98;">Murr.)-н жимс</div>
<svg style="position:absolute;left:602.05px;top:496.45px;width:229.87px;height:30.48px;overflow:visible;" viewBox="1100 1140 420 70" preserveAspectRatio="none"><path d="M1170 1146 L1173 1144 L1176 1146 L1179 1144 L1182 1146 L1185 1144 L1188 1146 L1191 1144 L1194 1146 L1197 1144 L1200 1146 L1203 1144 L1206 1146 L1209 1144 L1212 1146 L1215 1144 L1218 1146 L1221 1144 L1224 1146 L1227 1144 L1230 1146 L1233 1144 L1236 1146 L1239 1144 L1242 1146 L1245 1144 L1248 1146 L1251 1144 L1254 1146 L1257 1144 L1260 1146 L1263 1144 L1266 1146 L1269 1144 L1272 1146 L1275 1144 L1278 1146 L1281 1144 L1284 1146 L1287 1144 L1290 1146 L1293 1144 L1296 1146 L1299 1144 L1302 1146 L1305 1144" stroke="#e04040" stroke-width="1.3" fill="none"/><path d="M1312 1146 L1315 1144 L1318 1146 L1321 1144 L1324 1146 L1327 1144 L1330 1146 L1333 1144 L1336 1146 L1339 1144 L1342 1146 L1345 1144 L1348 1146 L1351 1144 L1354 1146 L1357 1144 L1360 1146 L1363 1144 L1366 1146 L1369 1144 L1372 1146 L1375 1144 L1378 1146 L1381 1144 L1384 1146 L1387 1144 L1390 1146 L1393 1144 L1396 1146 L1399 1144 L1402 1146 L1405 1144 L1408 1146 L1411 1144 L1414 1146 L1417 1144 L1420 1146 L1423 1144 L1426 1146 L1429 1144 L1432 1146 L1435 1144 L1438 1146 L1441 1144 L1444 1146 L1447 1144 L1450 1146 L1453 1144 L1456 1146 L1459 1144 L1462 1146 L1465 1144 L1468 1146 L1471 1144 L1474 1146 L1477 1144 L1480 1146 L1483 1144 L1486 1146 L1489 1144 L1492 1146 L1495 1144 L1498 1146 L1501 1144 L1504 1146 L1507 1144 L1510 1146" stroke="#e04040" stroke-width="1.3" fill="none"/><path d="M1086 1203 L1089 1201 L1092 1203 L1095 1201 L1098 1203 L1101 1201 L1104 1203 L1107 1201 L1110 1203 L1113 1201 L1116 1203 L1119 1201 L1122 1203 L1125 1201 L1128 1203 L1131 1201 L1134 1203 L1137 1201 L1140 1203 L1143 1201 L1146 1203 L1149 1201 L1152 1203 L1155 1201 L1158 1203 L1161 1201 L1164 1203 L1167 1201 L1170 1203" stroke="#e04040" stroke-width="1.3" fill="none"/></svg>
<div class="t" style="left:538.4px;top:554.95px;font-size:18.25px;color:#111;font-weight:bold;transform:scaleX(1.1052);transform-origin:0 0;-webkit-text-stroke:0.3px #111;">МҮҮФ-н өгүүллийн төсөл</div>
<div class="t" style="left:715.9px;top:751.9px;font-size:16.42px;color:#111;font-weight:bold;transform:scaleX(1.0164);transform-origin:0 0;-webkit-text-stroke:0.3px #111;">2022-05-19</div>
<svg style="position:absolute;left:851.08px;top:511.69px;width:188.83px;height:250.4px;overflow:visible;" viewBox="1555 1175 345 575" preserveAspectRatio="none"><defs><clipPath id="t_phc"><rect x="1560.7" y="1182.5" width="331.8" height="559.5" rx="38" ry="42"/></clipPath><linearGradient id="t_sky" x1="0" y1="0" x2="0" y2="1"><stop offset="0" stop-color="#84acdc"/><stop offset="0.6" stop-color="#a6c4e6"/><stop offset="1" stop-color="#c4d6ea"/></linearGradient><linearGradient id="t_gnd" x1="0" y1="0" x2="0" y2="1"><stop offset="0" stop-color="#cdb992"/><stop offset="0.25" stop-color="#b0a880"/><stop offset="0.6" stop-color="#95a078"/><stop offset="1" stop-color="#b8b49a"/></linearGradient><filter id="t_bl" x="-20%" y="-20%" width="140%" height="140%"><feGaussianBlur stdDeviation="8"/></filter><filter id="t_bl2" x="-5%" y="-5%" width="110%" height="110%"><feGaussianBlur stdDeviation="1.2"/></filter></defs><g clip-path="url(#t_phc)"><rect x="1560" y="1182" width="334" height="362" fill="url(#t_sky)"/><rect x="1560" y="1540" width="334" height="204" fill="url(#t_gnd)"/><g filter="url(#t_bl)"><ellipse cx="1850" cy="1240" rx="55" ry="40" fill="#e6edf6"/><ellipse cx="1865" cy="1330" rx="45" ry="35" fill="#dfe7f2"/><ellipse cx="1725" cy="1380" rx="120" ry="170" fill="#a9bf8e" opacity="0.8"/><ellipse cx="1600" cy="1650" rx="55" ry="45" fill="#8a9a70"/><ellipse cx="1850" cy="1660" rx="60" ry="80" fill="#8e9c74"/><ellipse cx="1700" cy="1710" rx="80" ry="35" fill="#c0b49a"/><ellipse cx="1840" cy="1560" rx="50" ry="40" fill="#a4b088"/></g><g filter="url(#t_bl2)"><path d="M1565 1245 C1620 1280 1680 1330 1700 1390" stroke="#dccaa6" stroke-width="10" fill="none"/><path d="M1718 1470 C1720 1560 1725 1650 1728 1745" stroke="#dccaa6" stroke-width="8" fill="none"/><path d="M1780 1480 C1820 1510 1860 1530 1895 1550" stroke="#c9b08a" stroke-width="6" fill="none"/><path d="M1660 1620 L1712 1660" stroke="#dccaa6" stroke-width="5" fill="none"/><ellipse cx="1710" cy="1431" rx="7.4" ry="42.5" transform="rotate(-19 1710 1431)" fill="#a2bc86" stroke="#7f9c64" stroke-width="1"/><ellipse cx="1767" cy="1527" rx="9.1" ry="34.5" transform="rotate(7 1767 1527)" fill="#a2bc86" stroke="#7f9c64" stroke-width="1"/><ellipse cx="1795" cy="1496" rx="10.1" ry="53.6" transform="rotate(11 1795 1496)" fill="#b6cc9c" stroke="#7f9c64" stroke-width="1"/><ellipse cx="1755" cy="1208" rx="8.1" ry="43.0" transform="rotate(-51 1755 1208)" fill="#b6cc9c" stroke="#7f9c64" stroke-width="1"/><ellipse cx="1744" cy="1304" rx="11.1" ry="32.9" transform="rotate(11 1744 1304)" fill="#a4c08a" stroke="#7f9c64" stroke-width="1"/><ellipse cx="1749" cy="1260" rx="7.5" ry="47.2" transform="rotate(9 1749 1260)" fill="#8aa86e" stroke="#7f9c64" stroke-width="1"/><ellipse cx="1750" cy="1348" rx="8.6" ry="43.8" transform="rotate(-7 1750 1348)" fill="#96b27c" stroke="#7f9c64" stroke-width="1"/><ellipse cx="1812" cy="1282" rx="7.9" ry="49.1" transform="rotate(-59 1812 1282)" fill="#96b27c" stroke="#7f9c64" stroke-width="1"/><ellipse cx="1604" cy="1460" rx="8.4" ry="54.5" transform="rotate(-53 1604 1460)" fill="#b6cc9c" stroke="#7f9c64" stroke-width="1"/><ellipse cx="1706" cy="1251" rx="8.7" ry="53.2" transform="rotate(-11 1706 1251)" fill="#a4c08a" stroke="#7f9c64" stroke-width="1"/><ellipse cx="1802" cy="1482" rx="11.1" ry="37.2" transform="rotate(-21 1802 1482)" fill="#b6cc9c" stroke="#7f9c64" stroke-width="1"/><ellipse cx="1723" cy="1501" rx="11.7" ry="40.8" transform="rotate(23 1723 1501)" fill="#a2bc86" stroke="#7f9c64" stroke-width="1"/><ellipse cx="1719" cy="1404" rx="10.4" ry="40.0" transform="rotate(30 1719 1404)" fill="#a4c08a" stroke="#7f9c64" stroke-width="1"/><ellipse cx="1674" cy="1318" rx="11.7" ry="37.6" transform="rotate(16 1674 1318)" fill="#b6cc9c" stroke="#7f9c64" stroke-width="1"/><ellipse cx="1821" cy="1238" rx="8.2" ry="38.6" transform="rotate(52 1821 1238)" fill="#a2bc86" stroke="#7f9c64" stroke-width="1"/><ellipse cx="1762" cy="1252" rx="9.0" ry="35.5" transform="rotate(-51 1762 1252)" fill="#b6cc9c" stroke="#7f9c64" stroke-width="1"/><ellipse cx="1757" cy="1344" rx="8.8" ry="51.9" transform="rotate(64 1757 1344)" fill="#aec692" stroke="#7f9c64" stroke-width="1"/><ellipse cx="1688" cy="1221" rx="7.8" ry="45.8" transform="rotate(-68 1688 1221)" fill="#8aa86e" stroke="#7f9c64" stroke-width="1"/><ellipse cx="1745" cy="1244" rx="9.7" ry="44.5" transform="rotate(-25 1745 1244)" fill="#aec692" stroke="#7f9c64" stroke-width="1"/><ellipse cx="1769" cy="1445" rx="9.6" ry="44.7" transform="rotate(25 1769 1445)" fill="#a2bc86" stroke="#7f9c64" stroke-width="1"/><ellipse cx="1798" cy="1542" rx="10.4" ry="43.1" transform="rotate(-14 1798 1542)" fill="#b6cc9c" stroke="#7f9c64" stroke-width="1"/><ellipse cx="1793" cy="1213" rx="7.3" ry="33.6" transform="rotate(-47 1793 1213)" fill="#96b27c" stroke="#7f9c64" stroke-width="1"/><ellipse cx="1777" cy="1412" rx="7.5" ry="43.3" transform="rotate(5 1777 1412)" fill="#96b27c" stroke="#7f9c64" stroke-width="1"/><ellipse cx="1708" cy="1267" rx="8.9" ry="45.1" transform="rotate(64 1708 1267)" fill="#8aa86e" stroke="#7f9c64" stroke-width="1"/><ellipse cx="1710" cy="1325" rx="7.6" ry="50.9" transform="rotate(69 1710 1325)" fill="#b6cc9c" stroke="#7f9c64" stroke-width="1"/><ellipse cx="1674" cy="1243" rx="10.7" ry="48.0" transform="rotate(-3 1674 1243)" fill="#a4c08a" stroke="#7f9c64" stroke-width="1"/><ellipse cx="1731" cy="1250" rx="7.1" ry="53.7" transform="rotate(4 1731 1250)" fill="#aec692" stroke="#7f9c64" stroke-width="1"/><ellipse cx="1676" cy="1471" rx="8.5" ry="45.4" transform="rotate(-57 1676 1471)" fill="#96b27c" stroke="#7f9c64" stroke-width="1"/><ellipse cx="1601" cy="1382" rx="11.5" ry="37.6" transform="rotate(-39 1601 1382)" fill="#8aa86e" stroke="#7f9c64" stroke-width="1"/><ellipse cx="1735" cy="1273" rx="11.1" ry="54.6" transform="rotate(49 1735 1273)" fill="#aec692" stroke="#7f9c64" stroke-width="1"/><ellipse cx="1757" cy="1493" rx="9.6" ry="37.6" transform="rotate(-66 1757 1493)" fill="#a2bc86" stroke="#7f9c64" stroke-width="1"/><ellipse cx="1715" cy="1482" rx="10.0" ry="37.3" transform="rotate(43 1715 1482)" fill="#a4c08a" stroke="#7f9c64" stroke-width="1"/><ellipse cx="1824" cy="1556" rx="8.1" ry="34.1" transform="rotate(-42 1824 1556)" fill="#aec692" stroke="#7f9c64" stroke-width="1"/><ellipse cx="1709" cy="1369" rx="11.9" ry="44.5" transform="rotate(-70 1709 1369)" fill="#a4c08a" stroke="#7f9c64" stroke-width="1"/><ellipse cx="1843" cy="1499" rx="7.6" ry="38.5" transform="rotate(30 1843 1499)" fill="#aec692" stroke="#7f9c64" stroke-width="1"/><ellipse cx="1766" cy="1482" rx="8.7" ry="49.6" transform="rotate(66 1766 1482)" fill="#b6cc9c" stroke="#7f9c64" stroke-width="1"/><ellipse cx="1629" cy="1221" rx="7.8" ry="54.8" transform="rotate(-66 1629 1221)" fill="#8aa86e" stroke="#7f9c64" stroke-width="1"/><ellipse cx="1774" cy="1525" rx="11.1" ry="54.5" transform="rotate(22 1774 1525)" fill="#96b27c" stroke="#7f9c64" stroke-width="1"/><ellipse cx="1693" cy="1248" rx="9.7" ry="28.6" transform="rotate(42 1693 1248)" fill="#a4c08a" stroke="#7f9c64" stroke-width="1"/><ellipse cx="1691" cy="1535" rx="9.2" ry="51.5" transform="rotate(46 1691 1535)" fill="#aec692" stroke="#7f9c64" stroke-width="1"/><ellipse cx="1766" cy="1375" rx="10.8" ry="36.8" transform="rotate(6 1766 1375)" fill="#aec692" stroke="#7f9c64" stroke-width="1"/><ellipse cx="1732" cy="1213" rx="10.7" ry="52.2" transform="rotate(23 1732 1213)" fill="#8aa86e" stroke="#7f9c64" stroke-width="1"/><ellipse cx="1607" cy="1376" rx="9.7" ry="42.1" transform="rotate(-67 1607 1376)" fill="#b6cc9c" stroke="#7f9c64" stroke-width="1"/><ellipse cx="1789" cy="1477" rx="10.0" ry="49.0" transform="rotate(-49 1789 1477)" fill="#aec692" stroke="#7f9c64" stroke-width="1"/><ellipse cx="1630" cy="1396" rx="8.6" ry="42.0" transform="rotate(8 1630 1396)" fill="#a2bc86" stroke="#7f9c64" stroke-width="1"/><ellipse cx="1803" cy="1517" rx="7.2" ry="30.6" transform="rotate(-7 1803 1517)" fill="#a2bc86" stroke="#7f9c64" stroke-width="1"/><ellipse cx="1739" cy="1471" rx="11.6" ry="40.0" transform="rotate(16 1739 1471)" fill="#8aa86e" stroke="#7f9c64" stroke-width="1"/><ellipse cx="1694" cy="1293" rx="9.5" ry="49.8" transform="rotate(1 1694 1293)" fill="#aec692" stroke="#7f9c64" stroke-width="1"/><ellipse cx="1700" cy="1449" rx="11.4" ry="53.4" transform="rotate(-34 1700 1449)" fill="#8aa86e" stroke="#7f9c64" stroke-width="1"/><ellipse cx="1757" cy="1356" rx="9.1" ry="38.6" transform="rotate(-26 1757 1356)" fill="#a4c08a" stroke="#7f9c64" stroke-width="1"/><ellipse cx="1700" cy="1279" rx="7.4" ry="46.1" transform="rotate(40 1700 1279)" fill="#aec692" stroke="#7f9c64" stroke-width="1"/><ellipse cx="1805" cy="1325" rx="8.3" ry="31.7" transform="rotate(-5 1805 1325)" fill="#a4c08a" stroke="#7f9c64" stroke-width="1"/><ellipse cx="1695" cy="1542" rx="11.9" ry="50.5" transform="rotate(-47 1695 1542)" fill="#b6cc9c" stroke="#7f9c64" stroke-width="1"/><ellipse cx="1700" cy="1558" rx="8.8" ry="30.5" transform="rotate(-19 1700 1558)" fill="#96b27c" stroke="#7f9c64" stroke-width="1"/><ellipse cx="1761" cy="1395" rx="9.2" ry="28.5" transform="rotate(-24 1761 1395)" fill="#8aa86e" stroke="#7f9c64" stroke-width="1"/><ellipse cx="1682" cy="1232" rx="11.6" ry="34.2" transform="rotate(53 1682 1232)" fill="#a2bc86" stroke="#7f9c64" stroke-width="1"/><ellipse cx="1872" cy="1288" rx="7.2" ry="49.0" transform="rotate(-32 1872 1288)" fill="#aec692" stroke="#7f9c64" stroke-width="1"/><ellipse cx="1775" cy="1440" rx="11.7" ry="39.0" transform="rotate(5 1775 1440)" fill="#8aa86e" stroke="#7f9c64" stroke-width="1"/><ellipse cx="1619" cy="1401" rx="10.5" ry="30.4" transform="rotate(-62 1619 1401)" fill="#a4c08a" stroke="#7f9c64" stroke-width="1"/><ellipse cx="1777" cy="1290" rx="7.1" ry="30.4" transform="rotate(-34 1777 1290)" fill="#8aa86e" stroke="#7f9c64" stroke-width="1"/><ellipse cx="1887" cy="1507" rx="9.3" ry="37.2" transform="rotate(7 1887 1507)" fill="#96b27c" stroke="#7f9c64" stroke-width="1"/><ellipse cx="1774" cy="1420" rx="7.2" ry="47.2" transform="rotate(61 1774 1420)" fill="#aec692" stroke="#7f9c64" stroke-width="1"/><ellipse cx="1804" cy="1535" rx="10.1" ry="42.3" transform="rotate(-41 1804 1535)" fill="#b6cc9c" stroke="#7f9c64" stroke-width="1"/><ellipse cx="1687" cy="1318" rx="7.1" ry="34.8" transform="rotate(-68 1687 1318)" fill="#a4c08a" stroke="#7f9c64" stroke-width="1"/><ellipse cx="1725" cy="1377" rx="11.9" ry="41.9" transform="rotate(-36 1725 1377)" fill="#b6cc9c" stroke="#7f9c64" stroke-width="1"/><ellipse cx="1812" cy="1350" rx="9.5" ry="50.5" transform="rotate(-15 1812 1350)" fill="#8aa86e" stroke="#7f9c64" stroke-width="1"/><ellipse cx="1794" cy="1304" rx="8.1" ry="34.2" transform="rotate(-42 1794 1304)" fill="#a4c08a" stroke="#7f9c64" stroke-width="1"/><ellipse cx="1722" cy="1556" rx="11.9" ry="50.6" transform="rotate(-68 1722 1556)" fill="#a4c08a" stroke="#7f9c64" stroke-width="1"/><ellipse cx="1722" cy="1250" rx="7.4" ry="50.7" transform="rotate(52 1722 1250)" fill="#a4c08a" stroke="#7f9c64" stroke-width="1"/><ellipse cx="1673" cy="1549" rx="7.2" ry="33.0" transform="rotate(-32 1673 1549)" fill="#a2bc86" stroke="#7f9c64" stroke-width="1"/><ellipse cx="1614" cy="1325" rx="9.9" ry="35.9" transform="rotate(-41 1614 1325)" fill="#96b27c" stroke="#7f9c64" stroke-width="1"/><ellipse cx="1610" cy="1220" rx="7.3" ry="26.7" transform="rotate(-35 1610 1220)" fill="#a4c08a" stroke="#7f9c64" stroke-width="1"/><ellipse cx="1608" cy="1263" rx="6.0" ry="30.3" transform="rotate(-66 1608 1263)" fill="#b6cc9c" stroke="#7f9c64" stroke-width="1"/><ellipse cx="1643" cy="1248" rx="7.2" ry="37.6" transform="rotate(-66 1643 1248)" fill="#8aa86e" stroke="#7f9c64" stroke-width="1"/><ellipse cx="1667" cy="1216" rx="9.6" ry="40.7" transform="rotate(15 1667 1216)" fill="#96b27c" stroke="#7f9c64" stroke-width="1"/><ellipse cx="1655" cy="1262" rx="7.1" ry="37.4" transform="rotate(-57 1655 1262)" fill="#a4c08a" stroke="#7f9c64" stroke-width="1"/><ellipse cx="1670" cy="1280" rx="8.9" ry="41.2" transform="rotate(-58 1670 1280)" fill="#8aa86e" stroke="#7f9c64" stroke-width="1"/><ellipse cx="1658" cy="1272" rx="9.3" ry="25.3" transform="rotate(30 1658 1272)" fill="#a4c08a" stroke="#7f9c64" stroke-width="1"/><ellipse cx="1651" cy="1289" rx="6.9" ry="25.6" transform="rotate(-59 1651 1289)" fill="#96b27c" stroke="#7f9c64" stroke-width="1"/><ellipse cx="1676" cy="1246" rx="7.8" ry="26.0" transform="rotate(-77 1676 1246)" fill="#8aa86e" stroke="#7f9c64" stroke-width="1"/><ellipse cx="1651" cy="1261" rx="6.0" ry="41.0" transform="rotate(40 1651 1261)" fill="#8aa86e" stroke="#7f9c64" stroke-width="1"/><ellipse cx="1671" cy="1207" rx="8.1" ry="39.9" transform="rotate(-4 1671 1207)" fill="#a2bc86" stroke="#7f9c64" stroke-width="1"/><ellipse cx="1666" cy="1227" rx="9.0" ry="29.6" transform="rotate(24 1666 1227)" fill="#b6cc9c" stroke="#7f9c64" stroke-width="1"/><ellipse cx="1634" cy="1247" rx="7.9" ry="38.7" transform="rotate(43 1634 1247)" fill="#8aa86e" stroke="#7f9c64" stroke-width="1"/><ellipse cx="1661" cy="1581" rx="36" ry="44" fill="#0e0c10"/><ellipse cx="1650" cy="1565" rx="8" ry="14" fill="#3a3a48" opacity="0.6"/><ellipse cx="1732" cy="1434" rx="24" ry="26" fill="#15120f"/><ellipse cx="1808" cy="1527" rx="20" ry="28" fill="#0d0d12"/><ellipse cx="1798" cy="1525" rx="12" ry="22" fill="#8a8070"/><ellipse cx="1729" cy="1327" rx="22" ry="24" fill="#211a16"/><ellipse cx="1650" cy="1270" rx="16" ry="20" fill="#2a241e"/><ellipse cx="1779" cy="1365" rx="18" ry="17" fill="#5f4d38"/></g></g></svg></div>
<div style="left:29.01px;top:518.92px;width:204.7px;height:155.03px;background:#fff;box-sizing:border-box;border:2px solid #6a6a6a;"></div>
<div class="t" style="left:45.97px;top:533.53px;font-size:4.56px;color:#222;font-weight:bold;transform:scaleX(1.0892);transform-origin:0 0;">Шинжилгээний ажлыг гүйцэтгэсэн байгууллагын нэр:</div>
<div class="t" style="left:45.97px;top:544.28px;font-size:4.26px;color:#6a6a6a;transform:scaleX(1.3319);transform-origin:0 0;">ШУА, Химийн Технологийн Хүрээлэн, Байгалийн Нэгдлийн Химийн</div>
<div class="t" style="left:45.97px;top:549.55px;font-size:4.26px;color:#6a6a6a;transform:scaleX(1.0424);transform-origin:0 0;">Лаборатори</div>
<div class="t" style="left:45.97px;top:555.21px;font-size:4.26px;color:#6a6a6a;transform:scaleX(1.0537);transform-origin:0 0;">ШУА, Ургамлын Цэцэрлэгт Хүрээлэн, Ургамалжилтын Экологи, Эдийн засгийн</div>
<div class="t" style="left:45.97px;top:560.48px;font-size:4.26px;color:#6a6a6a;transform:scaleX(1.0424);transform-origin:0 0;">Лаборатори</div>
<div class="t" style="left:45.97px;top:566.44px;font-size:4.26px;color:#6a6a6a;transform:scaleX(1.0392);transform-origin:0 0;">ШУА, Биологийн Хүрээлэн, Ургамлын Биотехнологийн Лаборатори ба Микробын</div>
<div class="t" style="left:45.97px;top:571.54px;font-size:4.26px;color:#6a6a6a;transform:scaleX(1.2206);transform-origin:0 0;">Нэгдлийн Лаборатори</div>
<div class="t" style="left:45.97px;top:581.65px;font-size:4.56px;color:#222;font-weight:bold;transform:scaleX(0.9796);transform-origin:0 0;">Шинжилгээний ажлыг гүйцэтгэсэн ажилтны нэр, албан тушаал:</div>
<div class="t" style="left:45.97px;top:592.97px;font-size:4.26px;color:#6a6a6a;transform:scaleX(1.1863);transform-origin:0 0;">Г.Сэргэлэн</div>
<div class="t" style="left:45.97px;top:604.24px;font-size:4.26px;color:#6a6a6a;transform:scaleX(1.2004);transform-origin:0 0;">М.Энхтуяа</div>
<div class="t" style="left:45.97px;top:615.26px;font-size:4.26px;color:#6a6a6a;transform:scaleX(1.2936);transform-origin:0 0;">Ш.Баасан</div>
<div class="t" style="left:45.97px;top:619.79px;font-size:4.26px;color:#6a6a6a;transform:scaleX(1.0418);transform-origin:0 0;">Д.Нямжаргал</div>
<div class="t" style="left:45.97px;top:630.68px;font-size:4.26px;color:#6a6a6a;transform:scaleX(1.2127);transform-origin:0 0;">Г.Батцэцэг</div>
<div class="t" style="left:45.97px;top:642px;font-size:4.26px;color:#6a6a6a;transform:scaleX(1.1102);transform-origin:0 0;">Э.Ганбаатар</div>
<div class="t" style="left:81.44px;top:592.97px;font-size:4.26px;color:#6a6a6a;transform:scaleX(1.0656);transform-origin:0 0;">ШУА, ХХТХ, эрдэм шинжилгээний тэргүүлэх ажилтан, Химийн</div>
<div class="t" style="left:81.44px;top:598.37px;font-size:4.26px;color:#6a6a6a;transform:scaleX(1.0480);transform-origin:0 0;">шинжлэх ухааны доктор, профессор</div>
<div class="t" style="left:81.44px;top:604.24px;font-size:4.26px;color:#6a6a6a;">ШУА, ХХТХ, эрдэм шинжилгээний ахлах ажилтан, биотехнологийн</div>
<div class="t" style="left:81.44px;top:609.43px;font-size:4.26px;color:#6a6a6a;transform:scaleX(1.0381);transform-origin:0 0;">ухааны магистр</div>
<div class="t" style="left:81.44px;top:615.26px;font-size:4.26px;color:#6a6a6a;transform:scaleX(1.0591);transform-origin:0 0;">ШУА, ХХТХ, эрдэм шинжилгээний дадлагажигч ажилтан</div>
<div class="t" style="left:81.44px;top:619.79px;font-size:4.26px;color:#6a6a6a;transform:scaleX(1.0096);transform-origin:0 0;">ШУА, БХ-ийн эрдэмтэн нарийн бичгийн дарга, ахлах</div>
<div class="t" style="left:81.44px;top:625.45px;font-size:4.26px;color:#6a6a6a;transform:scaleX(1.0574);transform-origin:0 0;">шинжилгээний ахлах ажилтан, биологийн ухааны доктор (PhD)</div>
<div class="t" style="left:81.44px;top:630.68px;font-size:4.26px;color:#6a6a6a;transform:scaleX(1.0786);transform-origin:0 0;">ШУА, БХ эрдэм шинжилгээний дадлагажигч ажилтан, биологийн</div>
<div class="t" style="left:81.44px;top:636.34px;font-size:4.26px;color:#6a6a6a;transform:scaleX(1.0381);transform-origin:0 0;">ухааны магистр</div>
<div class="t" style="left:81.44px;top:642px;font-size:4.26px;color:#6a6a6a;transform:scaleX(1.0542);transform-origin:0 0;">ШУА, БХ, эрдэм шинжилгээний дэд ажилтан, биологийн ухааны</div>
<div class="t" style="left:81.44px;top:647.66px;font-size:4.26px;color:#6a6a6a;transform:scaleX(1.0895);transform-origin:0 0;">магистр</div>
<div class="t" style="left:45.97px;top:657.24px;font-size:4.26px;color:#6a6a6a;transform:scaleX(1.1550);transform-origin:0 0;">Байгуулсан: 2021 оны 11-р сарын 04 өдөр</div>
<div class="t" style="left:45.97px;top:663.34px;font-size:4.26px;color:#6a6a6a;transform:scaleX(1.0622);transform-origin:0 0;">Үргэлжлэх хугацаа: 2020 он</div>
<svg style="position:absolute;left:30.1px;top:520.4px;width:202.51px;height:152.42px;overflow:visible;" viewBox="55 1195 370 350" preserveAspectRatio="none"><path d="M391 1369 V1402 L398 1396 L404 1409 L409 1407 L403 1394 L412 1394 Z" fill="#fff" stroke="#222" stroke-width="1.8"/></svg>
<div style="left:30.43px;top:690.59px;width:202.18px;height:152.29px;background:#fff;box-sizing:border-box;border:0.8px solid #c9c9c9;"></div>
<svg style="position:absolute;left:31.2px;top:691.11px;width:200.32px;height:151.11px;overflow:visible;" viewBox="57 1587 366 347" preserveAspectRatio="none"><rect x="73" y="1622.0" width="209" height="2" fill="#777" opacity="0.9"/><path d="M142 1782 C155 1830 155 1870 142 1912" stroke="#f8c8a8" stroke-width="7" fill="none"/><rect x="77.3" y="1635.4" width="61.5" height="118.5" fill="#a4aa80"/><rect x="77.3" y="1635.4" width="61.5" height="40" fill="#b0c6dc"/><path d="M90 1640 L110 1750 M120 1645 L100 1700" stroke="#8fb070" stroke-width="6"/><rect x="77.3" y="1710" width="61.5" height="44" fill="#b8a888" opacity="0.7"/><ellipse cx="95" cy="1712" rx="9" ry="12" fill="#222"/><rect x="77.3" y="1772.9" width="61.5" height="66.4" fill="#f3eeee"/><ellipse cx="88" cy="1808" rx="9" ry="14" fill="#333" opacity="0.85"/><ellipse cx="125" cy="1805" rx="13" ry="22" fill="#2a2a2a" opacity="0.85"/><rect x="77.3" y="1866.4" width="61.5" height="51.6" fill="#eee"/><ellipse cx="100" cy="1892" rx="22" ry="24" fill="#111"/></svg>
<div class="t" style="left:40.83px;top:698.46px;font-size:5.47px;color:#111;font-weight:bold;transform:scaleX(1.0328);transform-origin:0 0;">Орос махирс (Lycium ruthenicum Murr.)</div>
<div class="t" style="left:86.81px;top:713.86px;font-size:4.26px;color:#6a6a6a;transform:scaleX(1.1877);transform-origin:0 0;">Чонхарганы (Solanaceae) овгийн намхандаа өндөр шаст</div>
<div class="t" style="left:86.81px;top:720.39px;font-size:4.26px;color:#6a6a6a;transform:scaleX(1.2496);transform-origin:0 0;">бут ургамал юм. Монголчууд үүнийг чонон хармаг гэж</div>
<div class="t" style="left:86.81px;top:726.92px;font-size:4.26px;color:#6a6a6a;transform:scaleX(1.0928);transform-origin:0 0;">нэрлэдэг.</div>
<div class="t" style="left:86.81px;top:735.98px;font-size:4.26px;color:#6a6a6a;transform:scaleX(1.3291);transform-origin:0 0;">Төв Ази, Оросын өмнөд нутаг, Хятадын хойд хэсэг</div>
<div class="t" style="left:86.81px;top:741.64px;font-size:4.26px;color:#6a6a6a;transform:scaleX(1.3337);transform-origin:0 0;">Энэтхэгийн Кашмир, Монголын говь цөлийн бүсэд</div>
<div class="t" style="left:86.81px;top:748.13px;font-size:4.26px;color:#6a6a6a;transform:scaleX(1.2913);transform-origin:0 0;">хужир давстай, элсэрхэг хөрстэй нуурын ургадаг.</div>
<div class="t" style="left:86.81px;top:793.33px;font-size:4.26px;color:#6a6a6a;transform:scaleX(1.1606);transform-origin:0 0;">Жимсийг хуурай болон шинээр нь хэрэглэж, ходоод гэдэс</div>
<div class="t" style="left:86.81px;top:798.91px;font-size:4.26px;color:#6a6a6a;transform:scaleX(1.3649);transform-origin:0 0;">өвдөх, цусан бөөлжих, үрэвсэл намдаах, харшил</div>
<div class="t" style="left:86.81px;top:805.18px;font-size:4.26px;color:#6a6a6a;transform:scaleX(1.3407);transform-origin:0 0;">тэмдэг хоригдох, нүдний хараа сайжруулах зэрэгт</div>
<div class="t" style="left:86.81px;top:811.53px;font-size:4.26px;color:#6a6a6a;transform:scaleX(1.1909);transform-origin:0 0;">хэрэглэдэг.</div>
<div class="t" style="left:86.81px;top:821.33px;font-size:4.26px;color:#6a6a6a;transform:scaleX(1.3048);transform-origin:0 0;">Хятадад Орос махирсыг тариалж үр жимсийг нь эм</div>
<div class="t" style="left:86.81px;top:826.3px;font-size:4.26px;color:#6a6a6a;transform:scaleX(1.1957);transform-origin:0 0;">болон хүнсний үйлдвэрийн түүхий эд болгон ашигладаг.</div>
<div class="t" style="left:86.81px;top:757.32px;font-size:4.26px;color:#f0a06a;transform:scaleX(1.3052);transform-origin:0 0;">Жимсэнд флавоноид, антоцианидин, фенол хүчил,</div>
<div class="t" style="left:86.81px;top:763.5px;font-size:4.26px;color:#f0a06a;transform:scaleX(1.2914);transform-origin:0 0;">полисахарид, алкалоид, витамин A, C, E, B1, B2, үл</div>
<div class="t" style="left:86.81px;top:769.38px;font-size:4.26px;color:#f0a06a;transform:scaleX(1.2431);transform-origin:0 0;">орлуулах тосны хүчил болон ашигт эрдэс элементүүд</div>
<div class="t" style="left:86.81px;top:775.65px;font-size:4.26px;color:#f0a06a;transform:scaleX(1.1457);transform-origin:0 0;">өндөр агуулагддаг.</div>
<div class="t" style="left:86.81px;top:784.5px;font-size:5.17px;color:#e8306a;font-weight:bold;transform:scaleX(0.9750);transform-origin:0 0;">Уламжлалт анагаах ухаанд:</div>
<div style="left:454.28px;top:343.6px;width:611.9px;height:458.13px;background:#d2d2d2;"></div>
<div style="left:455.37px;top:344.47px;width:609.71px;height:456.39px;background:#fff;"></div>
<div style="left:1251.17px;top:335.76px;width:13.68px;height:414.58px;background:#dcdbdc;"></div>
<div style="left:1251.17px;top:335.76px;width:13.68px;height:12.19px;background:#fff;box-sizing:border-box;border:1px solid #cfcfcf;"></div>
<div style="left:1251.17px;top:349.26px;width:13.68px;height:30.48px;background:#fff;box-sizing:border-box;border:1px solid #cfcfcf;"></div>
<div style="left:1251.17px;top:750.34px;width:13.68px;height:13.5px;background:#fff;box-sizing:border-box;border:1px solid #cfcfcf;"></div>
<svg style="position:absolute;left:1250.08px;top:335.32px;width:15.32px;height:459.44px;overflow:visible;" viewBox="2284 770 28 1055" preserveAspectRatio="none"><path d="M2293 789 L2298.5 781 L2304 789 Z M2293 1734 H2304 L2298.5 1742 Z" fill="#6a6a6a"/><path d="M2293 1772 L2298.5 1764 L2304 1772 Z M2293 1782 L2298.5 1774 L2304 1782 Z M2293 1813 H2304 L2298.5 1821 Z M2293 1803 H2304 L2298.5 1811 Z" fill="#777"/></svg>
<div style="left:268.73px;top:815.01px;width:997.22px;height:0.87px;background:#c6c5c6;"></div>
<div class="t" style="left:279.68px;top:823.42px;font-size:13.99px;color:#6a6a6a;transform:scaleX(0.9598);transform-origin:0 0;">Click to add notes</div>
<div style="left:6.02px;top:847.45px;width:1259.93px;height:19.16px;background:#f1f0f1;"></div>
<div style="left:6.02px;top:847.02px;width:1259.93px;height:0.65px;background:#d0d0d0;"></div>
<div class="t" style="left:12.59px;top:851.68px;font-size:10.95px;color:#4a4a4a;transform:scaleX(1.0391);transform-origin:0 0;">Slide 1 of 3</div>
<div class="t" style="left:118px;top:851.68px;font-size:10.95px;color:#4a4a4a;transform:scaleX(0.9434);transform-origin:0 0;">English (United States)</div>
<svg style="position:absolute;left:84.83px;top:849.19px;width:21.89px;height:17.42px;overflow:visible;" viewBox="155 1950 40 40" preserveAspectRatio="none"><path d="M163 1956 H176 V1976 H163 Z M169 1956 V1982" stroke="#777" stroke-width="1.8" fill="none"/><path d="M176 1958 L186 1972 M186 1958 L176 1972" stroke="#777" stroke-width="1.8"/></svg>
<div style="left:944.13px;top:847.45px;width:35.03px;height:19.16px;background:#c8c8c8;"></div>
<svg style="position:absolute;left:793.61px;top:847.45px;width:472.34px;height:19.16px;overflow:visible;" viewBox="1450 1946 863 44" preserveAspectRatio="none"><path d="M1462 1958 L1468 1952 L1474 1958 M1461 1963 H1476 M1461 1968 H1476 M1461 1973 H1476" stroke="#666" stroke-width="2" fill="none"/><path d="M1575 1954 H1596 V1968 H1585 L1581 1974 V1968 H1575 Z" fill="#777"/><rect x="1745" y="1954" width="24" height="27" fill="none" stroke="#666" stroke-width="2"/><rect x="1751" y="1959" width="12" height="10" fill="none" stroke="#666" stroke-width="1.6"/><rect x="1809" y="1955" width="10" height="9" fill="none" stroke="#666" stroke-width="1.8"/><rect x="1823" y="1955" width="10" height="9" fill="none" stroke="#666" stroke-width="1.8"/><rect x="1809" y="1970" width="10" height="9" fill="none" stroke="#666" stroke-width="1.8"/><rect x="1823" y="1970" width="10" height="9" fill="none" stroke="#666" stroke-width="1.8"/><path d="M1874 1954 H1896 V1980 H1874 Z M1885 1954 V1984 M1878 1960 H1882 M1878 1966 H1882 M1878 1972 H1882 M1888 1960 H1892 M1888 1966 H1892 M1888 1972 H1892" stroke="#666" stroke-width="1.8" fill="none"/><path d="M1937 1955 H1961 M1940 1957 V1970 H1958 V1957 M1949 1970 V1980 M1943 1980 H1955" stroke="#666" stroke-width="2" fill="none"/><path d="M1990 1967 H1998" stroke="#555" stroke-width="3"/><path d="M2006 1967 H2174" stroke="#999" stroke-width="1.5"/><rect x="2059" y="1956" width="5" height="22" fill="#555"/><path d="M2090 1962 V1972" stroke="#999" stroke-width="1.5"/><path d="M2186 1967 H2198 M2192 1961 V1973" stroke="#555" stroke-width="3"/><rect x="2279" y="1955" width="23" height="26" fill="none" stroke="#777" stroke-width="1.6"/><path d="M2290 1958 V1964 M2287 1961 L2290 1958 L2293 1961 M2290 1978 V1972 M2287 1975 L2290 1978 L2293 1975 M2282 1968 H2288 M2298 1968 H2292" stroke="#777" stroke-width="1.4" fill="none"/></svg>
<div class="t" style="left:815.51px;top:851.68px;font-size:10.95px;color:#4a4a4a;transform:scaleX(0.9569);transform-origin:0 0;">Notes</div>
<div class="t" style="left:877.35px;top:851.68px;font-size:10.95px;color:#4a4a4a;transform:scaleX(0.9203);transform-origin:0 0;">Comments</div>
<div class="t" style="left:1215.05px;top:851.68px;font-size:10.95px;color:#4a4a4a;transform:scaleX(0.9242);transform-origin:0 0;">69%</div>
<svg style="position:absolute;left:465.22px;top:354.92px;width:82.1px;height:60.97px;overflow:visible;" viewBox="850 815 150 140" preserveAspectRatio="none"><ellipse cx="906" cy="886.6" rx="48" ry="61" fill="#2e2a86"/><ellipse cx="906" cy="886.6" rx="43" ry="55" fill="none" stroke="#fff" stroke-width="1.6" opacity="0.8"/><path d="M876 890 C878 915 892 925 906 925 C920 925 934 915 936 890 C932 908 920 916 906 916 C892 916 880 908 876 890 Z" fill="#fff"/><ellipse cx="905.3" cy="880" rx="25" ry="32.6" fill="#fff"/><rect x="896.6" y="850" width="17.4" height="50.6" fill="#f3d77a"/><path d="M903 835 L906 828 L909 835 V845 H903 Z" fill="#fff"/><g fill="#fff" opacity="0.85"><circle cx="870" cy="872" r="3"/><circle cx="868" cy="886" r="3"/><circle cx="870" cy="900" r="3"/><circle cx="875" cy="914" r="3"/><circle cx="941" cy="872" r="3"/><circle cx="943" cy="886" r="3"/><circle cx="941" cy="900" r="3"/><circle cx="936" cy="914" r="3"/><circle cx="884" cy="930" r="2.5"/><circle cx="895" cy="935" r="2.5"/><circle cx="906" cy="937" r="2.5"/><circle cx="917" cy="935" r="2.5"/><circle cx="928" cy="930" r="2.5"/></g></svg>
<div class="t" style="left:529.37px;top:371.69px;font-size:10.34px;color:#2e2a86;font-weight:bold;transform:scaleX(0.6960);transform-origin:0 0;-webkit-text-stroke:0.4px #2e2a86;">MONGOLIAN ACADEMY OF SCIENCES</div>
<div style="left:529.26px;top:382.7px;width:133.55px;height:1.13px;background:#2e2a86;"></div>
<div class="t" style="left:529.37px;top:386.54px;font-size:14.29px;color:#2e2a86;transform:scaleX(0.7695);transform-origin:0 0;-webkit-text-stroke:0.25px #2e2a86;">INSTITUTE OF CHEMISTRY AND CHEMICAL TECHNOLOGY</div>
<svg style="position:absolute;left:993.39px;top:351.87px;width:57.47px;height:53.13px;overflow:visible;" viewBox="1815 808 105 122" preserveAspectRatio="none"><path d="M1869 814 L1902 834 V885 L1869 906 L1836 885 V834 Z" fill="none" stroke="#5aa84a" stroke-width="2"/><path d="M1873 820 L1897 836" stroke="#5aa84a" stroke-width="1.5"/><path d="M1841 877 L1867 897" stroke="#5aa84a" stroke-width="1.5"/><circle cx="1870" cy="873" r="19" fill="#9ed060" opacity="0.85"/><path d="M1860 858 C1860 840 1880 840 1880 858" fill="none" stroke="#7cc050" stroke-width="3"/><rect x="1864" y="840" width="12" height="14" fill="none" stroke="#8bd060" stroke-width="2"/><ellipse cx="1854" cy="852" rx="7" ry="5" fill="#6cbc40"/><ellipse cx="1886" cy="856" rx="6" ry="4" fill="#6cbc40"/><text x="1823" y="852" font-family="Liberation Serif" font-size="30" fill="#111">N</text><text x="1859" y="878" font-family="Liberation Serif" font-size="26" fill="#111">P</text><text x="1891" y="902" font-family="Liberation Serif" font-size="30" fill="#222">C</text><text x="1834" y="922" font-family="Liberation Sans" font-weight="bold" font-size="10.5" fill="#3cab3c" textLength="70" lengthAdjust="spacingAndGlyphs">LABORATORY</text></svg>
<div class="t" style="left:496.97px;top:480.19px;font-size:19.46px;color:#9a2e98;font-weight:bold;font-style:italic;transform:scaleX(1.0387);transform-origin:0 0;-webkit-text-stroke:0.35px #9a2e98;">Орос махирс (Lycium ruthenicum</div>
<div class="t" style="left:594.39px;top:504.62px;font-size:19.46px;color:#9a2e98;font-weight:bold;font-style:italic;transform:scaleX(1.0340);transform-origin:0 0;-webkit-text-stroke:0.35px #9a2e98;">Murr.)-н жимс</div>
<svg style="position:absolute;left:602.05px;top:496.45px;width:229.87px;height:30.48px;overflow:visible;" viewBox="1100 1140 420 70" preserveAspectRatio="none"><path d="M1170 1146 L1173 1144 L1176 1146 L1179 1144 L1182 1146 L1185 1144 L1188 1146 L1191 1144 L1194 1146 L1197 1144 L1200 1146 L1203 1144 L1206 1146 L1209 1144 L1212 1146 L1215 1144 L1218 1146 L1221 1144 L1224 1146 L1227 1144 L1230 1146 L1233 1144 L1236 1146 L1239 1144 L1242 1146 L1245 1144 L1248 1146 L1251 1144 L1254 1146 L1257 1144 L1260 1146 L1263 1144 L1266 1146 L1269 1144 L1272 1146 L1275 1144 L1278 1146 L1281 1144 L1284 1146 L1287 1144 L1290 1146 L1293 1144 L1296 1146 L1299 1144 L1302 1146 L1305 1144" stroke="#e04040" stroke-width="1.3" fill="none"/><path d="M1312 1146 L1315 1144 L1318 1146 L1321 1144 L1324 1146 L1327 1144 L1330 1146 L1333 1144 L1336 1146 L1339 1144 L1342 1146 L1345 1144 L1348 1146 L1351 1144 L1354 1146 L1357 1144 L1360 1146 L1363 1144 L1366 1146 L1369 1144 L1372 1146 L1375 1144 L1378 1146 L1381 1144 L1384 1146 L1387 1144 L1390 1146 L1393 1144 L1396 1146 L1399 1144 L1402 1146 L1405 1144 L1408 1146 L1411 1144 L1414 1146 L1417 1144 L1420 1146 L1423 1144 L1426 1146 L1429 1144 L1432 1146 L1435 1144 L1438 1146 L1441 1144 L1444 1146 L1447 1144 L1450 1146 L1453 1144 L1456 1146 L1459 1144 L1462 1146 L1465 1144 L1468 1146 L1471 1144 L1474 1146 L1477 1144 L1480 1146 L1483 1144 L1486 1146 L1489 1144 L1492 1146 L1495 1144 L1498 1146 L1501 1144 L1504 1146 L1507 1144 L1510 1146" stroke="#e04040" stroke-width="1.3" fill="none"/><path d="M1086 1203 L1089 1201 L1092 1203 L1095 1201 L1098 1203 L1101 1201 L1104 1203 L1107 1201 L1110 1203 L1113 1201 L1116 1203 L1119 1201 L1122 1203 L1125 1201 L1128 1203 L1131 1201 L1134 1203 L1137 1201 L1140 1203 L1143 1201 L1146 1203 L1149 1201 L1152 1203 L1155 1201 L1158 1203 L1161 1201 L1164 1203 L1167 1201 L1170 1203" stroke="#e04040" stroke-width="1.3" fill="none"/></svg>
<div class="t" style="left:538.4px;top:554.95px;font-size:18.25px;color:#111;font-weight:bold;transform:scaleX(1.1052);transform-origin:0 0;-webkit-text-stroke:0.3px #111;">МҮҮФ-н өгүүллийн төсөл</div>
<div class="t" style="left:715.9px;top:751.9px;font-size:16.42px;color:#111;font-weight:bold;transform:scaleX(1.0164);transform-origin:0 0;-webkit-text-stroke:0.3px #111;">2022-05-19</div>
<svg style="position:absolute;left:851.08px;top:511.69px;width:188.83px;height:250.4px;overflow:visible;" viewBox="1555 1175 345 575" preserveAspectRatio="none"><defs><clipPath id="phc"><rect x="1560.7" y="1182.5" width="331.8" height="559.5" rx="38" ry="42"/></clipPath><linearGradient id="sky" x1="0" y1="0" x2="0" y2="1"><stop offset="0" stop-color="#84acdc"/><stop offset="0.6" stop-color="#a6c4e6"/><stop offset="1" stop-color="#c4d6ea"/></linearGradient><linearGradient id="gnd" x1="0" y1="0" x2="0" y2="1"><stop offset="0" stop-color="#cdb992"/><stop offset="0.25" stop-color="#b0a880"/><stop offset="0.6" stop-color="#95a078"/><stop offset="1" stop-color="#b8b49a"/></linearGradient><filter id="bl" x="-20%" y="-20%" width="140%" height="140%"><feGaussianBlur stdDeviation="8"/></filter><filter id="bl2" x="-5%" y="-5%" width="110%" height="110%"><feGaussianBlur stdDeviation="1.2"/></filter></defs><g clip-path="url(#phc)"><rect x="1560" y="1182" width="334" height="362" fill="url(#sky)"/><rect x="1560" y="1540" width="334" height="204" fill="url(#gnd)"/><g filter="url(#bl)"><ellipse cx="1850" cy="1240" rx="55" ry="40" fill="#e6edf6"/><ellipse cx="1865" cy="1330" rx="45" ry="35" fill="#dfe7f2"/><ellipse cx="1725" cy="1380" rx="120" ry="170" fill="#a9bf8e" opacity="0.8"/><ellipse cx="1600" cy="1650" rx="55" ry="45" fill="#8a9a70"/><ellipse cx="1850" cy="1660" rx="60" ry="80" fill="#8e9c74"/><ellipse cx="1700" cy="1710" rx="80" ry="35" fill="#c0b49a"/><ellipse cx="1840" cy="1560" rx="50" ry="40" fill="#a4b088"/></g><g filter="url(#bl2)"><path d="M1565 1245 C1620 1280 1680 1330 1700 1390" stroke="#dccaa6" stroke-width="10" fill="none"/><path d="M1718 1470 C1720 1560 1725 1650 1728 1745" stroke="#dccaa6" stroke-width="8" fill="none"/><path d="M1780 1480 C1820 1510 1860 1530 1895 1550" stroke="#c9b08a" stroke-width="6" fill="none"/><path d="M1660 1620 L1712 1660" stroke="#dccaa6" stroke-width="5" fill="none"/><ellipse cx="1710" cy="1431" rx="7.4" ry="42.5" transform="rotate(-19 1710 1431)" fill="#a2bc86" stroke="#7f9c64" stroke-width="1"/><ellipse cx="1767" cy="1527" rx="9.1" ry="34.5" transform="rotate(7 1767 1527)" fill="#a2bc86" stroke="#7f9c64" stroke-width="1"/><ellipse cx="1795" cy="1496" rx="10.1" ry="53.6" transform="rotate(11 1795 1496)" fill="#b6cc9c" stroke="#7f9c64" stroke-width="1"/><ellipse cx="1755" cy="1208" rx="8.1" ry="43.0" transform="rotate(-51 1755 1208)" fill="#b6cc9c" stroke="#7f9c64" stroke-width="1"/><ellipse cx="1744" cy="1304" rx="11.1" ry="32.9" transform="rotate(11 1744 1304)" fill="#a4c08a" stroke="#7f9c64" stroke-width="1"/><ellipse cx="1749" cy="1260" rx="7.5" ry="47.2" transform="rotate(9 1749 1260)" fill="#8aa86e" stroke="#7f9c64" stroke-width="1"/><ellipse cx="1750" cy="1348" rx="8.6" ry="43.8" transform="rotate(-7 1750 1348)" fill="#96b27c" stroke="#7f9c64" stroke-width="1"/><ellipse cx="1812" cy="1282" rx="7.9" ry="49.1" transform="rotate(-59 1812 1282)" fill="#96b27c" stroke="#7f9c64" stroke-width="1"/><ellipse cx="1604" cy="1460" rx="8.4" ry="54.5" transform="rotate(-53 1604 1460)" fill="#b6cc9c" stroke="#7f9c64" stroke-width="1"/><ellipse cx="1706" cy="1251" rx="8.7" ry="53.2" transform="rotate(-11 1706 1251)" fill="#a4c08a" stroke="#7f9c64" stroke-width="1"/><ellipse cx="1802" cy="1482" rx="11.1" ry="37.2" transform="rotate(-21 1802 1482)" fill="#b6cc9c" stroke="#7f9c64" stroke-width="1"/><ellipse cx="1723" cy="1501" rx="11.7" ry="40.8" transform="rotate(23 1723 1501)" fill="#a2bc86" stroke="#7f9c64" stroke-width="1"/><ellipse cx="1719" cy="1404" rx="10.4" ry="40.0" transform="rotate(30 1719 1404)" fill="#a4c08a" stroke="#7f9c64" stroke-width="1"/><ellipse cx="1674" cy="1318" rx="11.7" ry="37.6" transform="rotate(16 1674 1318)" fill="#b6cc9c" stroke="#7f9c64" stroke-width="1"/><ellipse cx="1821" cy="1238" rx="8.2" ry="38.6" transform="rotate(52 1821 1238)" fill="#a2bc86" stroke="#7f9c64" stroke-width="1"/><ellipse cx="1762" cy="1252" rx="9.0" ry="35.5" transform="rotate(-51 1762 1252)" fill="#b6cc9c" stroke="#7f9c64" stroke-width="1"/><ellipse cx="1757" cy="1344" rx="8.8" ry="51.9" transform="rotate(64 1757 1344)" fill="#aec692" stroke="#7f9c64" stroke-width="1"/><ellipse cx="1688" cy="1221" rx="7.8" ry="45.8" transform="rotate(-68 1688 1221)" fill="#8aa86e" stroke="#7f9c64" stroke-width="1"/><ellipse cx="1745" cy="1244" rx="9.7" ry="44.5" transform="rotate(-25 1745 1244)" fill="#aec692" stroke="#7f9c64" stroke-width="1"/><ellipse cx="1769" cy="1445" rx="9.6" ry="44.7" transform="rotate(25 1769 1445)" fill="#a2bc86" stroke="#7f9c64" stroke-width="1"/><ellipse cx="1798" cy="1542" rx="10.4" ry="43.1" transform="rotate(-14 1798 1542)" fill="#b6cc9c" stroke="#7f9c64" stroke-width="1"/><ellipse cx="1793" cy="1213" rx="7.3" ry="33.6" transform="rotate(-47 1793 1213)" fill="#96b27c" stroke="#7f9c64" stroke-width="1"/><ellipse cx="1777" cy="1412" rx="7.5" ry="43.3" transform="rotate(5 1777 1412)" fill="#96b27c" stroke="#7f9c64" stroke-width="1"/><ellipse cx="1708" cy="1267" rx="8.9" ry="45.1" transform="rotate(64 1708 1267)" fill="#8aa86e" stroke="#7f9c64" stroke-width="1"/><ellipse cx="1710" cy="1325" rx="7.6" ry="50.9" transform="rotate(69 1710 1325)" fill="#b6cc9c" stroke="#7f9c64" stroke-width="1"/><ellipse cx="1674" cy="1243" rx="10.7" ry="48.0" transform="rotate(-3 1674 1243)" fill="#a4c08a" stroke="#7f9c64" stroke-width="1"/><ellipse cx="1731" cy="1250" rx="7.1" ry="53.7" transform="rotate(4 1731 1250)" fill="#aec692" stroke="#7f9c64" stroke-width="1"/><ellipse cx="1676" cy="1471" rx="8.5" ry="45.4" transform="rotate(-57 1676 1471)" fill="#96b27c" stroke="#7f9c64" stroke-width="1"/><ellipse cx="1601" cy="1382" rx="11.5" ry="37.6" transform="rotate(-39 1601 1382)" fill="#8aa86e" stroke="#7f9c64" stroke-width="1"/><ellipse cx="1735" cy="1273" rx="11.1" ry="54.6" transform="rotate(49 1735 1273)" fill="#aec692" stroke="#7f9c64" stroke-width="1"/><ellipse cx="1757" cy="1493" rx="9.6" ry="37.6" transform="rotate(-66 1757 1493)" fill="#a2bc86" stroke="#7f9c64" stroke-width="1"/><ellipse cx="1715" cy="1482" rx="10.0" ry="37.3" transform="rotate(43 1715 1482)" fill="#a4c08a" stroke="#7f9c64" stroke-width="1"/><ellipse cx="1824" cy="1556" rx="8.1" ry="34.1" transform="rotate(-42 1824 1556)" fill="#aec692" stroke="#7f9c64" stroke-width="1"/><ellipse cx="1709" cy="1369" rx="11.9" ry="44.5" transform="rotate(-70 1709 1369)" fill="#a4c08a" stroke="#7f9c64" stroke-width="1"/><ellipse cx="1843" cy="1499" rx="7.6" ry="38.5" transform="rotate(30 1843 1499)" fill="#aec692" stroke="#7f9c64" stroke-width="1"/><ellipse cx="1766" cy="1482" rx="8.7" ry="49.6" transform="rotate(66 1766 1482)" fill="#b6cc9c" stroke="#7f9c64" stroke-width="1"/><ellipse cx="1629" cy="1221" rx="7.8" ry="54.8" transform="rotate(-66 1629 1221)" fill="#8aa86e" stroke="#7f9c64" stroke-width="1"/><ellipse cx="1774" cy="1525" rx="11.1" ry="54.5" transform="rotate(22 1774 1525)" fill="#96b27c" stroke="#7f9c64" stroke-width="1"/><ellipse cx="1693" cy="1248" rx="9.7" ry="28.6" transform="rotate(42 1693 1248)" fill="#a4c08a" stroke="#7f9c64" stroke-width="1"/><ellipse cx="1691" cy="1535" rx="9.2" ry="51.5" transform="rotate(46 1691 1535)" fill="#aec692" stroke="#7f9c64" stroke-width="1"/><ellipse cx="1766" cy="1375" rx="10.8" ry="36.8" transform="rotate(6 1766 1375)" fill="#aec692" stroke="#7f9c64" stroke-width="1"/><ellipse cx="1732" cy="1213" rx="10.7" ry="52.2" transform="rotate(23 1732 1213)" fill="#8aa86e" stroke="#7f9c64" stroke-width="1"/><ellipse cx="1607" cy="1376" rx="9.7" ry="42.1" transform="rotate(-67 1607 1376)" fill="#b6cc9c" stroke="#7f9c64" stroke-width="1"/><ellipse cx="1789" cy="1477" rx="10.0" ry="49.0" transform="rotate(-49 1789 1477)" fill="#aec692" stroke="#7f9c64" stroke-width="1"/><ellipse cx="1630" cy="1396" rx="8.6" ry="42.0" transform="rotate(8 1630 1396)" fill="#a2bc86" stroke="#7f9c64" stroke-width="1"/><ellipse cx="1803" cy="1517" rx="7.2" ry="30.6" transform="rotate(-7 1803 1517)" fill="#a2bc86" stroke="#7f9c64" stroke-width="1"/><ellipse cx="1739" cy="1471" rx="11.6" ry="40.0" transform="rotate(16 1739 1471)" fill="#8aa86e" stroke="#7f9c64" stroke-width="1"/><ellipse cx="1694" cy="1293" rx="9.5" ry="49.8" transform="rotate(1 1694 1293)" fill="#aec692" stroke="#7f9c64" stroke-width="1"/><ellipse cx="1700" cy="1449" rx="11.4" ry="53.4" transform="rotate(-34 1700 1449)" fill="#8aa86e" stroke="#7f9c64" stroke-width="1"/><ellipse cx="1757" cy="1356" rx="9.1" ry="38.6" transform="rotate(-26 1757 1356)" fill="#a4c08a" stroke="#7f9c64" stroke-width="1"/><ellipse cx="1700" cy="1279" rx="7.4" ry="46.1" transform="rotate(40 1700 1279)" fill="#aec692" stroke="#7f9c64" stroke-width="1"/><ellipse cx="1805" cy="1325" rx="8.3" ry="31.7" transform="rotate(-5 1805 1325)" fill="#a4c08a" stroke="#7f9c64" stroke-width="1"/><ellipse cx="1695" cy="1542" rx="11.9" ry="50.5" transform="rotate(-47 1695 1542)" fill="#b6cc9c" stroke="#7f9c64" stroke-width="1"/><ellipse cx="1700" cy="1558" rx="8.8" ry="30.5" transform="rotate(-19 1700 1558)" fill="#96b27c" stroke="#7f9c64" stroke-width="1"/><ellipse cx="1761" cy="1395" rx="9.2" ry="28.5" transform="rotate(-24 1761 1395)" fill="#8aa86e" stroke="#7f9c64" stroke-width="1"/><ellipse cx="1682" cy="1232" rx="11.6" ry="34.2" transform="rotate(53 1682 1232)" fill="#a2bc86" stroke="#7f9c64" stroke-width="1"/><ellipse cx="1872" cy="1288" rx="7.2" ry="49.0" transform="rotate(-32 1872 1288)" fill="#aec692" stroke="#7f9c64" stroke-width="1"/><ellipse cx="1775" cy="1440" rx="11.7" ry="39.0" transform="rotate(5 1775 1440)" fill="#8aa86e" stroke="#7f9c64" stroke-width="1"/><ellipse cx="1619" cy="1401" rx="10.5" ry="30.4" transform="rotate(-62 1619 1401)" fill="#a4c08a" stroke="#7f9c64" stroke-width="1"/><ellipse cx="1777" cy="1290" rx="7.1" ry="30.4" transform="rotate(-34 1777 1290)" fill="#8aa86e" stroke="#7f9c64" stroke-width="1"/><ellipse cx="1887" cy="1507" rx="9.3" ry="37.2" transform="rotate(7 1887 1507)" fill="#96b27c" stroke="#7f9c64" stroke-width="1"/><ellipse cx="1774" cy="1420" rx="7.2" ry="47.2" transform="rotate(61 1774 1420)" fill="#aec692" stroke="#7f9c64" stroke-width="1"/><ellipse cx="1804" cy="1535" rx="10.1" ry="42.3" transform="rotate(-41 1804 1535)" fill="#b6cc9c" stroke="#7f9c64" stroke-width="1"/><ellipse cx="1687" cy="1318" rx="7.1" ry="34.8" transform="rotate(-68 1687 1318)" fill="#a4c08a" stroke="#7f9c64" stroke-width="1"/><ellipse cx="1725" cy="1377" rx="11.9" ry="41.9" transform="rotate(-36 1725 1377)" fill="#b6cc9c" stroke="#7f9c64" stroke-width="1"/><ellipse cx="1812" cy="1350" rx="9.5" ry="50.5" transform="rotate(-15 1812 1350)" fill="#8aa86e" stroke="#7f9c64" stroke-width="1"/><ellipse cx="1794" cy="1304" rx="8.1" ry="34.2" transform="rotate(-42 1794 1304)" fill="#a4c08a" stroke="#7f9c64" stroke-width="1"/><ellipse cx="1722" cy="1556" rx="11.9" ry="50.6" transform="rotate(-68 1722 1556)" fill="#a4c08a" stroke="#7f9c64" stroke-width="1"/><ellipse cx="1722" cy="1250" rx="7.4" ry="50.7" transform="rotate(52 1722 1250)" fill="#a4c08a" stroke="#7f9c64" stroke-width="1"/><ellipse cx="1673" cy="1549" rx="7.2" ry="33.0" transform="rotate(-32 1673 1549)" fill="#a2bc86" stroke="#7f9c64" stroke-width="1"/><ellipse cx="1614" cy="1325" rx="9.9" ry="35.9" transform="rotate(-41 1614 1325)" fill="#96b27c" stroke="#7f9c64" stroke-width="1"/><ellipse cx="1610" cy="1220" rx="7.3" ry="26.7" transform="rotate(-35 1610 1220)" fill="#a4c08a" stroke="#7f9c64" stroke-width="1"/><ellipse cx="1608" cy="1263" rx="6.0" ry="30.3" transform="rotate(-66 1608 1263)" fill="#b6cc9c" stroke="#7f9c64" stroke-width="1"/><ellipse cx="1643" cy="1248" rx="7.2" ry="37.6" transform="rotate(-66 1643 1248)" fill="#8aa86e" stroke="#7f9c64" stroke-width="1"/><ellipse cx="1667" cy="1216" rx="9.6" ry="40.7" transform="rotate(15 1667 1216)" fill="#96b27c" stroke="#7f9c64" stroke-width="1"/><ellipse cx="1655" cy="1262" rx="7.1" ry="37.4" transform="rotate(-57 1655 1262)" fill="#a4c08a" stroke="#7f9c64" stroke-width="1"/><ellipse cx="1670" cy="1280" rx="8.9" ry="41.2" transform="rotate(-58 1670 1280)" fill="#8aa86e" stroke="#7f9c64" stroke-width="1"/><ellipse cx="1658" cy="1272" rx="9.3" ry="25.3" transform="rotate(30 1658 1272)" fill="#a4c08a" stroke="#7f9c64" stroke-width="1"/><ellipse cx="1651" cy="1289" rx="6.9" ry="25.6" transform="rotate(-59 1651 1289)" fill="#96b27c" stroke="#7f9c64" stroke-width="1"/><ellipse cx="1676" cy="1246" rx="7.8" ry="26.0" transform="rotate(-77 1676 1246)" fill="#8aa86e" stroke="#7f9c64" stroke-width="1"/><ellipse cx="1651" cy="1261" rx="6.0" ry="41.0" transform="rotate(40 1651 1261)" fill="#8aa86e" stroke="#7f9c64" stroke-width="1"/><ellipse cx="1671" cy="1207" rx="8.1" ry="39.9" transform="rotate(-4 1671 1207)" fill="#a2bc86" stroke="#7f9c64" stroke-width="1"/><ellipse cx="1666" cy="1227" rx="9.0" ry="29.6" transform="rotate(24 1666 1227)" fill="#b6cc9c" stroke="#7f9c64" stroke-width="1"/><ellipse cx="1634" cy="1247" rx="7.9" ry="38.7" transform="rotate(43 1634 1247)" fill="#8aa86e" stroke="#7f9c64" stroke-width="1"/><ellipse cx="1661" cy="1581" rx="36" ry="44" fill="#0e0c10"/><ellipse cx="1650" cy="1565" rx="8" ry="14" fill="#3a3a48" opacity="0.6"/><ellipse cx="1732" cy="1434" rx="24" ry="26" fill="#15120f"/><ellipse cx="1808" cy="1527" rx="20" ry="28" fill="#0d0d12"/><ellipse cx="1798" cy="1525" rx="12" ry="22" fill="#8a8070"/><ellipse cx="1729" cy="1327" rx="22" ry="24" fill="#211a16"/><ellipse cx="1650" cy="1270" rx="16" ry="20" fill="#2a241e"/><ellipse cx="1779" cy="1365" rx="18" ry="17" fill="#5f4d38"/></g></g></svg>
<div style="left:1359px;top:149.81px;width:159.82px;height:89.71px;background:#202121;"></div>
<div style="left:1359px;top:246.05px;width:159.82px;height:89.71px;background:#202121;"></div>
<div style="left:1359px;top:341.85px;width:159.82px;height:90.15px;background:#202121;"></div>
<div style="left:1359px;top:438.1px;width:159.82px;height:89.71px;background:#202121;"></div>
<div style="left:1359px;top:533.9px;width:159.82px;height:90.15px;background:#202121;"></div>
<div style="left:1359px;top:630.15px;width:159.82px;height:89.71px;background:#202121;"></div>
<div style="left:1359px;top:725.95px;width:159.82px;height:90.15px;background:#202121;"></div>
<div style="left:1359px;top:822.19px;width:159.82px;height:89.71px;background:#202121;"></div>
<div class="t" style="left:1377.33px;top:189.24px;font-size:12.16px;color:#f4f4f4;font-weight:bold;transform:scaleX(1.2285);transform-origin:0 0;">nomin  munkhb...</div>
<div style="left:1359px;top:220.35px;width:139.84px;height:19.16px;background:rgba(48,48,48,0.78);"></div>
<div class="t" style="left:1363.38px;top:225.08px;font-size:11.19px;color:#eaeaea;transform:scaleX(1.1414);transform-origin:0 0;">nomin munkhbat XXTX</div>
<div class="t" style="left:1387.18px;top:284.5px;font-size:13.38px;color:#f4f4f4;font-weight:bold;transform:scaleX(1.0714);transform-origin:0 0;">Э.Баасандорж</div>
<div style="left:1359px;top:316.16px;width:91.95px;height:19.6px;background:rgba(48,48,48,0.78);"></div>
<div class="t" style="left:1363.38px;top:321.02px;font-size:11.19px;color:#eaeaea;transform:scaleX(1.1104);transform-origin:0 0;">Э.Баасандорж</div>
<svg style="position:absolute;left:1359px;top:341.85px;width:159.82px;height:90.15px;overflow:visible;" viewBox="2483 785 292 207" preserveAspectRatio="none"><defs><linearGradient id="v3" x1="0" y1="1" x2="0.6" y2="0"><stop offset="0" stop-color="#96d2b6"/><stop offset="0.6" stop-color="#a8dcc2"/><stop offset="1" stop-color="#bfe4d2"/></linearGradient><filter id="vb"><feGaussianBlur stdDeviation="4"/></filter><filter id="vb2"><feGaussianBlur stdDeviation="2"/></filter><clipPath id="c3"><rect x="2483" y="785" width="292" height="207"/></clipPath></defs><g clip-path="url(#c3)"><rect x="2483" y="785" width="292" height="207" fill="url(#v3)"/><g filter="url(#vb2)"><path d="M2520 992 C2522 955 2530 915 2560 905 C2590 900 2620 903 2632 912 L2640 992 Z" fill="#a99ab2"/><path d="M2612 992 C2618 960 2640 915 2685 898 L2775 880 V992 Z" fill="#1b8a52"/><path d="M2700 870 C2720 860 2760 860 2775 870 V992 H2740 C2730 960 2715 930 2705 905 Z" fill="#b49688"/><path d="M2690 785 H2775 V870 C2750 868 2725 878 2718 895 C2710 912 2700 920 2692 905 C2690 890 2678 885 2676 872 C2672 860 2676 848 2688 842 C2684 820 2690 800 2700 790 Z" fill="#1f2826"/><ellipse cx="2709" cy="873" rx="9" ry="20" fill="#c4a49c"/><rect x="2745" y="945" width="30" height="47" fill="#e8eef0"/></g></g></svg>
<div style="left:1359px;top:411.97px;width:143.95px;height:20.03px;background:rgba(40,40,40,0.62);"></div>
<div class="t" style="left:1380.78px;top:417.08px;font-size:11.19px;color:#f0f0f0;transform:scaleX(1.1085);transform-origin:0 0;">ЭЭХХЗГ-Д.Уранзаяа</div>
<svg style="position:absolute;left:1359px;top:412.84px;width:20.25px;height:19.16px;overflow:visible;" viewBox="2483 948 37 44" preserveAspectRatio="none"><rect x="2495.5" y="956" width="9" height="17" rx="4.5" fill="none" stroke="#e0443c" stroke-width="2.2"/><path d="M2491 967 C2491 979 2509 979 2509 967 M2500 979 V985 M2495 985 H2505 M2489 986 L2511 955" stroke="#e0443c" stroke-width="2.2" fill="none"/></svg>
<div class="t" style="left:1404.86px;top:476.55px;font-size:13.38px;color:#f4f4f4;font-weight:bold;transform:scaleX(1.0919);transform-origin:0 0;">Цэцэгмаа</div>
<div style="left:1359px;top:508.82px;width:64.86px;height:18.99px;background:rgba(48,48,48,0.78);"></div>
<div class="t" style="left:1363.38px;top:513.02px;font-size:11.19px;color:#eaeaea;transform:scaleX(1.1200);transform-origin:0 0;">Цэцэгмаа</div>
<div style="left:1355.17px;top:530.16px;width:167.7px;height:97.81px;background:linear-gradient(180deg,#e3e878 0%,#a4d24e 35%,#6cc04a 50%,#a4d24e 65%,#e9e87c 100%);"></div>
<div style="left:1359px;top:533.69px;width:159.82px;height:90.8px;background:#202121;"></div>
<div class="t" style="left:1408.8px;top:572.22px;font-size:13.38px;color:#f4f4f4;font-weight:bold;transform:scaleX(1.0745);transform-origin:0 0;">Ганболд</div>
<div style="left:1359px;top:604.58px;width:57.3px;height:19.9px;background:rgba(48,48,48,0.78);"></div>
<div class="t" style="left:1363.38px;top:609.7px;font-size:11.19px;color:#eaeaea;transform:scaleX(1.1431);transform-origin:0 0;">Ганболд</div>
<svg style="position:absolute;left:1359px;top:630.15px;width:159.82px;height:89.71px;overflow:visible;" viewBox="2483 1447 292 206" preserveAspectRatio="none"><defs><clipPath id="c6"><rect x="2483" y="1447" width="292" height="206"/></clipPath><linearGradient id="w6" x1="0" y1="0" x2="1" y2="1"><stop offset="0" stop-color="#aaa49c"/><stop offset="0.5" stop-color="#aaa6aa"/><stop offset="1" stop-color="#a49ca0"/></linearGradient><linearGradient id="w6b" x1="1" y1="0" x2="0" y2="1"><stop offset="0.45" stop-color="#8a98a8" stop-opacity="0"/><stop offset="1" stop-color="#8a98a8" stop-opacity="0.55"/></linearGradient></defs><g clip-path="url(#c6)"><rect x="2483" y="1447" width="292" height="206" fill="url(#w6)"/><rect x="2483" y="1447" width="292" height="206" fill="url(#w6b)"/><g filter="url(#vb)"><rect x="2719" y="1447" width="56" height="206" fill="#857a58"/><path d="M2735 1447 C2730 1520 2755 1580 2745 1653 M2760 1447 C2765 1520 2750 1600 2768 1653" stroke="#6a6046" stroke-width="4" fill="none"/><path d="M2651 1600 C2648 1560 2660 1535 2682 1534 C2702 1534 2712 1555 2712 1590 L2700 1575 C2690 1560 2670 1560 2660 1580 Z" fill="#7f8894"/><path d="M2655 1590 C2655 1570 2670 1560 2688 1562 C2708 1565 2722 1585 2720 1610 C2718 1640 2705 1653 2690 1653 H2665 C2656 1640 2652 1615 2655 1590 Z" fill="#c2a6ae"/><path d="M2615 1653 C2625 1630 2650 1625 2668 1630 L2690 1653 Z" fill="#3a2e28"/><path d="M2710 1630 C2730 1635 2740 1645 2745 1653 H2700 Z" fill="#d8d4d0"/></g><path d="M2655 1589 C2675 1586 2700 1588 2723 1591" stroke="#4a3838" stroke-width="2.5" fill="none"/></g></svg>
<div style="left:1359px;top:700.26px;width:70.06px;height:19.6px;background:rgba(40,40,40,0.6);"></div>
<div class="t" style="left:1363.38px;top:705.07px;font-size:11.19px;color:#f0f0f0;transform:scaleX(1.1011);transform-origin:0 0;">Selenge D.</div>
<svg style="position:absolute;left:1359px;top:725.95px;width:159.82px;height:90.15px;overflow:visible;" viewBox="2483 1667 292 207" preserveAspectRatio="none"><defs><clipPath id="c7"><rect x="2483" y="1667" width="292" height="207"/></clipPath><linearGradient id="w7" x1="0" y1="0" x2="1" y2="0"><stop offset="0" stop-color="#c9c2cf"/><stop offset="0.3" stop-color="#d8d0e2"/><stop offset="0.7" stop-color="#e4eadc"/><stop offset="1" stop-color="#cdcdd0"/></linearGradient></defs><g clip-path="url(#c7)"><rect x="2483" y="1667" width="292" height="207" fill="url(#w7)"/><g filter="url(#vb)"><path d="M2538 1790 C2530 1740 2545 1705 2575 1695 C2590 1675 2630 1668 2650 1685 C2685 1690 2712 1720 2708 1770 C2706 1800 2700 1810 2690 1815 L2688 1874 H2678 L2670 1800 H2565 L2560 1874 H2545 L2548 1810 C2540 1805 2538 1798 2538 1790 Z" fill="#1e1f2c"/><path d="M2558 1800 C2560 1770 2575 1745 2600 1738 C2630 1728 2665 1745 2675 1780 C2685 1815 2682 1850 2672 1874 H2570 C2560 1850 2556 1825 2558 1800 Z" fill="#b48c96"/><ellipse cx="2572" cy="1800" rx="9" ry="14" fill="#e6c4d6"/><ellipse cx="2612" cy="1835" rx="8" ry="12" fill="#e0bcd0"/><ellipse cx="2595" cy="1794" rx="12" ry="4" fill="#5a3a48"/><ellipse cx="2640" cy="1796" rx="12" ry="4" fill="#5a3a48"/><ellipse cx="2618" cy="1864" rx="14" ry="4" fill="#8a5a70"/></g></g></svg>
<div style="left:1359px;top:796.5px;width:62.94px;height:19.6px;background:rgba(40,40,40,0.6);"></div>
<div class="t" style="left:1363.38px;top:800.96px;font-size:11.19px;color:#f0f0f0;transform:scaleX(1.1077);transform-origin:0 0;">Одонтуяа</div>
<svg style="position:absolute;left:1404.97px;top:822.19px;width:68.42px;height:89.71px;overflow:visible;" viewBox="2567 1888 125 206" preserveAspectRatio="none"><defs><clipPath id="c8"><rect x="2567" y="1888" width="124.5" height="206"/></clipPath><pattern id="grid" width="6" height="6" patternUnits="userSpaceOnUse"><path d="M0 0 H6 M0 0 V6" stroke="#5a5a5a" stroke-width="1"/></pattern></defs><g clip-path="url(#c8)"><rect x="2567" y="1888" width="124.5" height="206" fill="#2c2c2c"/><rect x="2567" y="1888" width="124.5" height="206" fill="url(#grid)" opacity="0.7"/><g filter="url(#vb)"><path d="M2640 2040 C2660 1990 2680 1950 2691 1930 V2000 C2675 2030 2660 2060 2650 2080 Z" fill="#e8e8e8"/><ellipse cx="2580" cy="2005" rx="10" ry="14" fill="#d8d8d8"/><ellipse cx="2688" cy="2060" rx="6" ry="30" fill="#ccc"/></g><path d="M2640 1950 L2691 1990" stroke="#f0f0f0" stroke-width="3"/></g></svg>
<div style="left:1359px;top:893.18px;width:113.3px;height:18.73px;background:rgba(48,48,48,0.78);"></div>
<svg style="position:absolute;left:1359px;top:893.18px;width:20.25px;height:18.73px;overflow:visible;" viewBox="2483 2051 37 43" preserveAspectRatio="none"><rect x="2496.5" y="2058" width="9" height="17" rx="4.5" fill="none" stroke="#e0443c" stroke-width="2.2"/><path d="M2492 2069 C2492 2081 2510 2081 2510 2069 M2501 2081 V2087 M2496 2087 H2506 M2490 2088 L2512 2057" stroke="#e0443c" stroke-width="2.2" fill="none"/></svg>
<div class="t" style="left:1381.22px;top:897.2px;font-size:11.19px;color:#f0f0f0;transform:scaleX(1.0621);transform-origin:0 0;">Sh. Enkhzaya</div>
<div style="left:1600.09px;top:23.08px;width:319.91px;height:1016.85px;background:#fff;"></div>
<div class="t" style="left:1710.38px;top:39.27px;font-size:12.77px;color:#39394a;font-weight:bold;transform:scaleX(1.0079);transform-origin:0 0;">Participants (15)</div>
<svg style="position:absolute;left:1617.33px;top:37.02px;width:13.68px;height:8.71px;overflow:visible;" viewBox="2955 85 25 20" preserveAspectRatio="none"><path d="M2961 102 L2967.5 108 L2974 102" stroke="#555" stroke-width="2" fill="none"/></svg>
<div style="left:1619.41px;top:77.25px;width:284.5px;height:31.18px;background:#fff;box-sizing:border-box;border:1.2px solid #c3c1d3;border-radius:11px;"></div>
<svg style="position:absolute;left:1628.28px;top:84.92px;width:16.42px;height:17.42px;overflow:visible;" viewBox="2975 195 30 40" preserveAspectRatio="none"><circle cx="2989" cy="211" r="9" fill="none" stroke="#77768a" stroke-width="2.4"/><path d="M2995 218 L3002 226" stroke="#77768a" stroke-width="2.6"/></svg>
<div class="t" style="left:1647.43px;top:86.38px;font-size:12.16px;color:#77768a;transform:scaleX(1.0792);transform-origin:0 0;">Find a participant</div>
<div class="t" style="left:1620.07px;top:124.54px;font-size:13.38px;color:#232333;font-weight:bold;transform:scaleX(0.9846);transform-origin:0 0;">Waiting Room (3)</div>
<svg style="position:absolute;left:1737.74px;top:126.29px;width:16.42px;height:10.89px;overflow:visible;" viewBox="3175 290 30 25" preserveAspectRatio="none"><path d="M3181 299 L3188.5 307 L3196 299" stroke="#666" stroke-width="2.2" fill="none"/></svg>
<div class="t" style="left:1777.7px;top:124.54px;font-size:13.38px;color:#2f6ccc;font-weight:bold;transform:scaleX(0.9256);transform-origin:0 0;">Message</div>
<div class="t" style="left:1844.47px;top:124.54px;font-size:13.38px;color:#2f6ccc;font-weight:bold;">Admit All</div>
<div style="left:1622.81px;top:157.56px;width:25.72px;height:25.69px;background:#c6e1f6;border-radius:7px/9px;"></div>
<div class="t" style="left:1630.19px;top:165.44px;font-size:12.04px;color:#fff;transform:scaleX(1.0911);transform-origin:0 0;">M</div>
<div class="t" style="left:1661.12px;top:165.55px;font-size:12.16px;color:#232333;transform:scaleX(1.0512);transform-origin:0 0;">Монфа Царгис XXK</div>
<div style="left:1622.81px;top:198.54px;width:25.72px;height:25.69px;background:#c6e1f6;border-radius:7px/9px;"></div>
<div class="t" style="left:1631.56px;top:206.42px;font-size:12.04px;color:#fff;transform:scaleX(1.0220);transform-origin:0 0;">A</div>
<div class="t" style="left:1661.12px;top:206.53px;font-size:12.16px;color:#232333;transform:scaleX(1.0288);transform-origin:0 0;">АШУҮИС</div>
<div style="left:1622.81px;top:239.52px;width:25.72px;height:25.69px;background:#c6e1f6;border-radius:7px/9px;"></div>
<div class="t" style="left:1628.55px;top:247.39px;font-size:12.04px;color:#fff;transform:scaleX(0.8506);transform-origin:0 0;">ED</div>
<div class="t" style="left:1661.12px;top:247.51px;font-size:12.16px;color:#232333;transform:scaleX(1.0627);transform-origin:0 0;">Enkhmaa Dagvadorj</div>
<div class="t" style="left:1620.07px;top:287.42px;font-size:13.38px;color:#232333;font-weight:bold;transform:scaleX(0.9608);transform-origin:0 0;">Joined (15)</div>
<svg style="position:absolute;left:1696.69px;top:289.6px;width:16.42px;height:10.89px;overflow:visible;" viewBox="3100 665 30 25" preserveAspectRatio="none"><path d="M3108 673 L3115 680 L3122 673" stroke="#666" stroke-width="2.2" fill="none"/></svg>
<div style="left:1622.81px;top:320.52px;width:25.72px;height:25.69px;background:#2d7dc0;border-radius:7px/9px;"></div>
<div class="t" style="left:1630.19px;top:328.39px;font-size:12.04px;color:#fff;font-weight:bold;transform:scaleX(1.2777);transform-origin:0 0;">Э</div>
<div class="t" style="left:1661.12px;top:328.51px;font-size:12.16px;color:#2a2a38;transform:scaleX(1.0375);transform-origin:0 0;">Э.Баасандорж (Host, me)</div>
<div style="left:1622.81px;top:361.58px;width:25.72px;height:25.69px;background:#33475b;border-radius:7px/9px;"></div>
<div class="t" style="left:1625.82px;top:369.46px;font-size:12.04px;color:#fff;font-weight:bold;transform:scaleX(1.0520);transform-origin:0 0;">NM</div>
<div class="t" style="left:1661.12px;top:369.58px;font-size:12.16px;color:#2a2a38;transform:scaleX(1.0536);transform-origin:0 0;">nomin munkhbat XXTX</div>
<div style="left:1622.81px;top:402.65px;width:25.72px;height:25.69px;background:#f0a024;border-radius:7px/9px;"></div>
<div class="t" style="left:1626.91px;top:410.53px;font-size:12.04px;color:#fff;font-weight:bold;transform:scaleX(1.0469);transform-origin:0 0;">SD</div>
<div class="t" style="left:1661.12px;top:410.64px;font-size:12.16px;color:#2a2a38;transform:scaleX(1.0258);transform-origin:0 0;">Selenge D.</div>
<div style="left:1622.81px;top:443.71px;width:25.72px;height:25.69px;background:#d85a2a;border-radius:7px/9px;"></div>
<div class="t" style="left:1630.19px;top:451.59px;font-size:12.04px;color:#fff;font-weight:bold;transform:scaleX(1.6035);transform-origin:0 0;">Г</div>
<div class="t" style="left:1661.12px;top:451.71px;font-size:12.16px;color:#2a2a38;transform:scaleX(1.0668);transform-origin:0 0;">Ганболд</div>
<div style="left:1622.81px;top:484.78px;width:25.72px;height:25.69px;background:#189c7c;border-radius:7px/9px;"></div>
<div class="t" style="left:1630.19px;top:492.66px;font-size:12.04px;color:#fff;font-weight:bold;transform:scaleX(1.1686);transform-origin:0 0;">О</div>
<div class="t" style="left:1661.12px;top:492.77px;font-size:12.16px;color:#2a2a38;transform:scaleX(1.0311);transform-origin:0 0;">Одонтуяа</div>
<div style="left:1622.81px;top:525.85px;width:25.72px;height:25.69px;background:#f0a024;border-radius:7px/9px;"></div>
<div class="t" style="left:1630.19px;top:533.73px;font-size:12.04px;color:#fff;font-weight:bold;transform:scaleX(1.2444);transform-origin:0 0;">Ц</div>
<div class="t" style="left:1661.12px;top:533.84px;font-size:12.16px;color:#2a2a38;transform:scaleX(1.0304);transform-origin:0 0;">Цэцэгмаа</div>
<div style="left:1622.81px;top:566.91px;width:25.72px;height:25.69px;background:#f0a024;border-radius:7px/9px;"></div>
<div class="t" style="left:1626.91px;top:574.79px;font-size:12.04px;color:#fff;font-weight:bold;transform:scaleX(1.0469);transform-origin:0 0;">ED</div>
<div class="t" style="left:1661.12px;top:574.91px;font-size:12.16px;color:#2a2a38;transform:scaleX(1.0737);transform-origin:0 0;">Enkhjargal Dorjbal</div>
<div style="left:1622.81px;top:607.98px;width:25.72px;height:25.69px;background:#33475b;border-radius:7px/9px;"></div>
<div class="t" style="left:1626.91px;top:615.86px;font-size:12.04px;color:#fff;font-weight:bold;transform:scaleX(1.0902);transform-origin:0 0;">SE</div>
<div class="t" style="left:1661.12px;top:615.97px;font-size:12.16px;color:#2a2a38;transform:scaleX(0.9815);transform-origin:0 0;">Sh. Enkhzaya</div>
<div style="left:1622.81px;top:649.05px;width:25.72px;height:25.69px;background:#2d7dc0;border-radius:7px/9px;"></div>
<div class="t" style="left:1630.19px;top:656.92px;font-size:12.04px;color:#fff;font-weight:bold;transform:scaleX(1.2759);transform-origin:0 0;">Д</div>
<div class="t" style="left:1661.12px;top:657.04px;font-size:12.16px;color:#2a2a38;transform:scaleX(1.0384);transform-origin:0 0;">Д.Бямбадорж - ЭЭХХЗГ</div>
<div style="left:1622.81px;top:690.11px;width:25.72px;height:25.69px;background:#8c4fa2;border-radius:7px/9px;"></div>
<div class="t" style="left:1630.19px;top:697.99px;font-size:12.04px;color:#fff;font-weight:bold;transform:scaleX(1.2936);transform-origin:0 0;">Ч</div>
<div class="t" style="left:1661.12px;top:698.1px;font-size:12.16px;color:#2a2a38;transform:scaleX(1.0585);transform-origin:0 0;">Ч.Чимэдрагчаа</div>
<div style="left:1622.81px;top:731.18px;width:25.72px;height:25.69px;background:#2d7dc0;border-radius:7px/9px;"></div>
<div class="t" style="left:1630.19px;top:739.06px;font-size:12.04px;color:#fff;font-weight:bold;transform:scaleX(1.2777);transform-origin:0 0;">Э</div>
<div class="t" style="left:1661.12px;top:739.17px;font-size:12.16px;color:#2a2a38;transform:scaleX(1.0243);transform-origin:0 0;">Э.Баасандорж</div>
<div style="left:1622.81px;top:772.24px;width:25.72px;height:25.69px;background:#189c7c;border-radius:7px/9px;"></div>
<div class="t" style="left:1630.19px;top:780.12px;font-size:12.04px;color:#fff;font-weight:bold;transform:scaleX(1.2777);transform-origin:0 0;">Э</div>
<div class="t" style="left:1661.12px;top:780.24px;font-size:12.16px;color:#2a2a38;transform:scaleX(1.0164);transform-origin:0 0;">ЭЭХХЗГ Б.Хишигжаргал</div>
<div style="left:1622.81px;top:813.31px;width:25.72px;height:25.69px;background:#8c4fa2;border-radius:7px/9px;"></div>
<div class="t" style="left:1630.19px;top:821.19px;font-size:12.04px;color:#fff;font-weight:bold;transform:scaleX(1.2777);transform-origin:0 0;">Э</div>
<div class="t" style="left:1661.12px;top:821.3px;font-size:12.16px;color:#2a2a38;transform:scaleX(1.0137);transform-origin:0 0;">ЭЭХХЗГ-Д.Уранзаяа</div>
<div style="left:1622.81px;top:854.38px;width:25.72px;height:25.69px;background:#f0a024;border-radius:7px/9px;"></div>
<div class="t" style="left:1626.91px;top:862.25px;font-size:12.04px;color:#fff;font-weight:bold;transform:scaleX(1.0069);transform-origin:0 0;">AC</div>
<div class="t" style="left:1661.12px;top:862.37px;font-size:12.16px;color:#2a2a38;transform:scaleX(1.0872);transform-origin:0 0;">Amarjargal Choijoo</div>
<div style="left:1622.81px;top:895.44px;width:25.72px;height:25.69px;background:#d85a2a;border-radius:7px/9px;"></div>
<div class="t" style="left:1630.19px;top:903.32px;font-size:12.04px;color:#fff;font-weight:bold;transform:scaleX(1.2777);transform-origin:0 0;">Э</div>
<div class="t" style="left:1661.12px;top:903.44px;font-size:12.16px;color:#2a2a38;transform:scaleX(0.9556);transform-origin:0 0;">ЭЭХХЗГ</div>
<svg style="position:absolute;left:1833.52px;top:313.55px;width:76.62px;height:609.68px;overflow:visible;" viewBox="3350 720 140 1400" preserveAspectRatio="none"><g><rect x="3417" y="843.3" width="10" height="19" rx="5" fill="none" stroke="#8e8e9c" stroke-width="2"/><path d="M3413 855.3 C3413 869.3 3431 869.3 3431 855.3 M3422 869.3 V875.3 M3417 876.3 H3427" stroke="#8e8e9c" stroke-width="2" fill="none"/><path d="M3449 849.3 H3470 V871.3 H3449 Z M3470 857.3 L3479 851.3 V869.3 L3470 863.3" stroke="#e0343c" stroke-width="2" fill="none" stroke-linejoin="round"/><path d="M3447 877.3 L3477 844.3" stroke="#e0343c" stroke-width="2.2"/><rect x="3362" y="847.8" width="29" height="26.5" rx="2" fill="#12a14a"/><path d="M3376.5 869.3 V854.3 M3371 860.3 L3376.5 853.3 L3382 860.3" stroke="#fff" stroke-width="2.4" fill="none"/><rect x="3417" y="937.6" width="10" height="19" rx="5" fill="none" stroke="#8e8e9c" stroke-width="2"/><path d="M3413 949.6 C3413 963.6 3431 963.6 3431 949.6 M3422 963.6 V969.6 M3417 970.6 H3427" stroke="#8e8e9c" stroke-width="2" fill="none"/><path d="M3449 943.6 H3470 V965.6 H3449 Z M3470 951.6 L3479 945.6 V963.6 L3470 957.6" stroke="#70707e" stroke-width="2" fill="none" stroke-linejoin="round"/><rect x="3417" y="1031.9" width="10" height="19" rx="5" fill="#6a6a72" stroke="#6a6a72" stroke-width="2"/><path d="M3413 1043.9 C3413 1057.9 3431 1057.9 3431 1043.9 M3422 1057.9 V1063.9 M3417 1064.9 H3427" stroke="#6a6a72" stroke-width="2" fill="none"/><path d="M3449 1037.9 H3470 V1059.9 H3449 Z M3470 1045.9 L3479 1039.9 V1057.9 L3470 1051.9" stroke="#e0343c" stroke-width="2" fill="none" stroke-linejoin="round"/><path d="M3447 1065.9 L3477 1032.9" stroke="#e0343c" stroke-width="2.2"/><rect x="3417" y="1126.2" width="10" height="19" rx="5" fill="none" stroke="#8e8e9c" stroke-width="2"/><path d="M3413 1138.2 C3413 1152.2 3431 1152.2 3431 1138.2 M3422 1152.2 V1158.2 M3417 1159.2 H3427" stroke="#8e8e9c" stroke-width="2" fill="none"/><path d="M3449 1132.2 H3470 V1154.2 H3449 Z M3470 1140.2 L3479 1134.2 V1152.2 L3470 1146.2" stroke="#70707e" stroke-width="2" fill="none" stroke-linejoin="round"/><rect x="3417" y="1220.5" width="10" height="19" rx="5" fill="none" stroke="#8e8e9c" stroke-width="2"/><path d="M3413 1232.5 C3413 1246.5 3431 1246.5 3431 1232.5 M3422 1246.5 V1252.5 M3417 1253.5 H3427" stroke="#8e8e9c" stroke-width="2" fill="none"/><path d="M3449 1226.5 H3470 V1248.5 H3449 Z M3470 1234.5 L3479 1228.5 V1246.5 L3470 1240.5" stroke="#e0343c" stroke-width="2" fill="none" stroke-linejoin="round"/><path d="M3447 1254.5 L3477 1221.5" stroke="#e0343c" stroke-width="2.2"/><rect x="3417" y="1314.8" width="10" height="19" rx="5" fill="none" stroke="#e0343c" stroke-width="2"/><path d="M3413 1326.8 C3413 1340.8 3431 1340.8 3431 1326.8 M3422 1340.8 V1346.8 M3417 1347.8 H3427" stroke="#e0343c" stroke-width="2" fill="none"/><path d="M3412 1347.8 L3432 1315.8" stroke="#e0343c" stroke-width="2.2"/><path d="M3449 1320.8 H3470 V1342.8 H3449 Z M3470 1328.8 L3479 1322.8 V1340.8 L3470 1334.8" stroke="#e0343c" stroke-width="2" fill="none" stroke-linejoin="round"/><path d="M3447 1348.8 L3477 1315.8" stroke="#e0343c" stroke-width="2.2"/><rect x="3417" y="1409.1" width="10" height="19" rx="5" fill="none" stroke="#e0343c" stroke-width="2"/><path d="M3413 1421.1 C3413 1435.1 3431 1435.1 3431 1421.1 M3422 1435.1 V1441.1 M3417 1442.1 H3427" stroke="#e0343c" stroke-width="2" fill="none"/><path d="M3412 1442.1 L3432 1410.1" stroke="#e0343c" stroke-width="2.2"/><path d="M3449 1415.1 H3470 V1437.1 H3449 Z M3470 1423.1 L3479 1417.1 V1435.1 L3470 1429.1" stroke="#70707e" stroke-width="2" fill="none" stroke-linejoin="round"/><rect x="3417" y="1503.4" width="10" height="19" rx="5" fill="none" stroke="#e0343c" stroke-width="2"/><path d="M3413 1515.4 C3413 1529.4 3431 1529.4 3431 1515.4 M3422 1529.4 V1535.4 M3417 1536.4 H3427" stroke="#e0343c" stroke-width="2" fill="none"/><path d="M3412 1536.4 L3432 1504.4" stroke="#e0343c" stroke-width="2.2"/><path d="M3449 1509.4 H3470 V1531.4 H3449 Z M3470 1517.4 L3479 1511.4 V1529.4 L3470 1523.4" stroke="#e0343c" stroke-width="2" fill="none" stroke-linejoin="round"/><path d="M3447 1537.4 L3477 1504.4" stroke="#e0343c" stroke-width="2.2"/><rect x="3417" y="1597.6999999999998" width="10" height="19" rx="5" fill="none" stroke="#e0343c" stroke-width="2"/><path d="M3413 1609.6999999999998 C3413 1623.6999999999998 3431 1623.6999999999998 3431 1609.6999999999998 M3422 1623.6999999999998 V1629.6999999999998 M3417 1630.6999999999998 H3427" stroke="#e0343c" stroke-width="2" fill="none"/><path d="M3412 1630.6999999999998 L3432 1598.6999999999998" stroke="#e0343c" stroke-width="2.2"/><path d="M3449 1603.6999999999998 H3470 V1625.6999999999998 H3449 Z M3470 1611.6999999999998 L3479 1605.6999999999998 V1623.6999999999998 L3470 1617.6999999999998" stroke="#e0343c" stroke-width="2" fill="none" stroke-linejoin="round"/><path d="M3447 1631.6999999999998 L3477 1598.6999999999998" stroke="#e0343c" stroke-width="2.2"/><rect x="3417" y="1692.0" width="10" height="19" rx="5" fill="none" stroke="#e0343c" stroke-width="2"/><path d="M3413 1704.0 C3413 1718.0 3431 1718.0 3431 1704.0 M3422 1718.0 V1724.0 M3417 1725.0 H3427" stroke="#e0343c" stroke-width="2" fill="none"/><path d="M3412 1725.0 L3432 1693.0" stroke="#e0343c" stroke-width="2.2"/><path d="M3449 1698.0 H3470 V1720.0 H3449 Z M3470 1706.0 L3479 1700.0 V1718.0 L3470 1712.0" stroke="#e0343c" stroke-width="2" fill="none" stroke-linejoin="round"/><path d="M3447 1726.0 L3477 1693.0" stroke="#e0343c" stroke-width="2.2"/><rect x="3456" y="1786.3" width="10" height="19" rx="5" fill="none" stroke="#e0343c" stroke-width="2"/><path d="M3452 1798.3 C3452 1812.3 3470 1812.3 3470 1798.3 M3461 1812.3 V1818.3 M3456 1819.3 H3466" stroke="#e0343c" stroke-width="2" fill="none"/><path d="M3451 1819.3 L3471 1787.3" stroke="#e0343c" stroke-width="2.2"/><rect x="3417" y="1880.6" width="10" height="19" rx="5" fill="none" stroke="#e0343c" stroke-width="2"/><path d="M3413 1892.6 C3413 1906.6 3431 1906.6 3431 1892.6 M3422 1906.6 V1912.6 M3417 1913.6 H3427" stroke="#e0343c" stroke-width="2" fill="none"/><path d="M3412 1913.6 L3432 1881.6" stroke="#e0343c" stroke-width="2.2"/><path d="M3449 1886.6 H3470 V1908.6 H3449 Z M3470 1894.6 L3479 1888.6 V1906.6 L3470 1900.6" stroke="#70707e" stroke-width="2" fill="none" stroke-linejoin="round"/><circle cx="3423" cy="2085.7" r="11" fill="none" stroke="#9a9aa6" stroke-width="2"/><circle cx="3423" cy="2085.7" r="3.5" fill="#c43a3a"/><path d="M3449 2075.2 H3470 V2097.2 H3449 Z M3470 2083.2 L3479 2077.2 V2095.2 L3470 2089.2" stroke="#e0343c" stroke-width="2" fill="none" stroke-linejoin="round"/><path d="M3447 2103.2 L3477 2070.2" stroke="#e0343c" stroke-width="2.2"/></g></svg>
<div style="left:1904.68px;top:313.55px;width:15.32px;height:609.68px;background:#fff;"></div>
<div style="left:1649.51px;top:1002.92px;width:43.29px;height:22.82px;background:#f1f0f5;border-radius:9px/12px;"></div>
<div style="left:1741.46px;top:1002.92px;width:59.44px;height:22.82px;background:#f1f0f5;border-radius:9px/12px;"></div>
<div style="left:1849.4px;top:1002.92px;width:23.37px;height:22.82px;background:#f1f0f5;border-radius:9px/12px;"></div>
<div class="t" style="left:1656.74px;top:1008.3px;font-size:12.16px;color:#2a2a38;transform:scaleX(0.9789);transform-origin:0 0;">Invite</div>
<div class="t" style="left:1748.69px;top:1008.3px;font-size:12.16px;color:#2a2a38;transform:scaleX(1.0245);transform-origin:0 0;">Mute All</div>
<div style="left:0px;top:1039.94px;width:1920px;height:40.06px;background:#d2e2ea;"></div>
<div style="left:488.76px;top:1039.94px;width:44.88px;height:40.06px;background:#e6eff3;"></div>
<div style="left:199.22px;top:1077.82px;width:39.95px;height:2.18px;background:#3a7fd0;"></div>
<div style="left:345.91px;top:1077.82px;width:39.95px;height:2.18px;background:#3a7fd0;"></div>
<div style="left:488.76px;top:1077.82px;width:44.88px;height:2.18px;background:#3a7fd0;"></div>
<div style="left:541.85px;top:1077.82px;width:39.95px;height:2.18px;background:#3a7fd0;"></div>
<svg style="position:absolute;left:0px;top:1039.94px;width:1920px;height:40.06px;overflow:visible;" viewBox="0 2388 3508 92" preserveAspectRatio="none"><path d="M29 2421 L42 2419 V2433 H29 Z M44 2419 L58.5 2417 V2433 H44 Z M29 2435 H42 V2449 L29 2447 Z M44 2435 H58.5 V2451 L44 2449 Z" fill="#111"/><circle cx="133" cy="2430" r="8" fill="none" stroke="#111" stroke-width="2.4"/><path d="M127 2436 L117 2448" stroke="#111" stroke-width="2.6"/><ellipse cx="219" cy="2434" rx="12" ry="14" fill="none" stroke="#111" stroke-width="3"/><path d="M292 2428 V2448 H305 V2428 M292 2444 H305 M310 2434 V2448 M310 2427 V2430" stroke="#111" stroke-width="2.4" fill="none"/><rect x="380" y="2423" width="39" height="27" fill="#f4c43a"/><rect x="380" y="2423" width="39" height="6" fill="#e8b020"/><rect x="388" y="2436" width="23" height="14" fill="#2f7fd8"/><rect x="394" y="2442" width="11" height="8" fill="#f4c43a"/><circle cx="489" cy="2434" r="19" fill="#e6433a"/><path d="M489 2434 L505.5 2443.5 A19 19 0 0 1 470 2434 Z" fill="#2ea650"/><path d="M489 2434 L505.5 2443.5 A19 19 0 0 0 489 2415 Z" fill="#f6c52c"/><circle cx="489" cy="2434" r="8" fill="#fff"/><circle cx="489" cy="2434" r="6" fill="#3b7be0"/><circle cx="579" cy="2434" r="19" fill="#3aa6dc"/><path d="M568 2434 L590 2425 L586 2446 L579 2440 Z" fill="#fff"/><rect x="648" y="2419" width="27" height="34" fill="#2b5797"/><rect x="665" y="2423" width="23" height="26" fill="#fff" stroke="#2b5797" stroke-width="1.5"/><path d="M669 2430 H684 M669 2436 H684 M669 2442 H684" stroke="#2b5797" stroke-width="1.5"/><text x="651" y="2441" font-family="Liberation Sans" font-weight="bold" font-size="15" fill="#fff">W</text><path d="M740 2428 L755 2420 L770 2428 L760 2440 L745 2440 Z" fill="#d43a2a"/><path d="M756 2423 L775 2420 L778 2438 L762 2442 Z" fill="#3aa84a"/><path d="M748 2438 L764 2432 L770 2448 L752 2452 Z" fill="#f0b030"/><rect x="831" y="2420" width="25" height="33" fill="#3f6ab8"/><circle cx="848" cy="2437" r="9" fill="#cfe0f4" stroke="#223" stroke-width="2"/><path d="M854 2443 L866 2454" stroke="#223" stroke-width="3"/><rect x="916" y="2417" width="42" height="36" rx="9" fill="#5b8fe0"/><rect x="925" y="2427" width="17" height="16" rx="2" fill="#fff"/><path d="M943 2431 L950 2426 V2444 L943 2439 Z" fill="#fff"/><rect x="1007" y="2417" width="41" height="36" rx="4" fill="#c02a2a"/><path d="M1013 2445 C1020 2435 1028 2425 1027 2420 C1026 2428 1035 2440 1043 2442 C1033 2440 1020 2440 1013 2445 Z" fill="none" stroke="#fff" stroke-width="2.4"/><path d="M3108 2440 L3118.5 2430 L3129 2440" stroke="#111" stroke-width="2.4" fill="none"/><path d="M3150 2432 H3175 V2449 M3150 2432 V2449 H3175 M3162 2449 V2452 M3155 2452 H3170" stroke="#111" stroke-width="2.2" fill="none"/><circle cx="3152" cy="2429" r="2" fill="#111"/><path d="M3193 2429 H3199 L3206 2422 V2450 L3199 2443 H3193 Z" fill="none" stroke="#111" stroke-width="2"/><path d="M3211 2428 C3215 2433 3215 2439 3211 2444 M3216 2424 C3222 2431 3222 2441 3216 2448" stroke="#888" stroke-width="1.8" fill="none"/><path d="M3433 2416 H3463 V2446 H3452 L3448 2452 L3444 2446 H3433 Z" fill="#111"/><path d="M3439 2424 H3457 M3439 2430 H3457 M3439 2436 H3457" stroke="#fff" stroke-width="2"/></svg>
<div style="left:1914.53px;top:1039.94px;width:1.09px;height:40.06px;background:#b8c8d0;"></div>
<div class="t" style="left:1770.58px;top:1054.46px;font-size:12.16px;color:#111;">МОН</div>
<div class="t" style="left:1809.44px;top:1062.22px;font-size:12.77px;color:#111;transform:scaleX(0.8958);transform-origin:0 0;">5/19/2022</div>
<div class="t" style="left:1809.44px;top:1044.37px;font-size:12.77px;color:#111;transform:scaleX(0.9600);transform-origin:0 0;">11:33 AM</div>
<div style="left:52px;top:45.73px;width:1815.46px;height:9.15px;background:#fff;"></div>
<div style="left:52px;top:1048.43px;width:1815.46px;height:8.71px;background:#fff;"></div>
<div style="left:52px;top:45.73px;width:11.49px;height:1011.41px;background:#fff;"></div>
<div style="left:1856.51px;top:45.73px;width:10.95px;height:1011.41px;background:#fff;"></div></div></body></html>
